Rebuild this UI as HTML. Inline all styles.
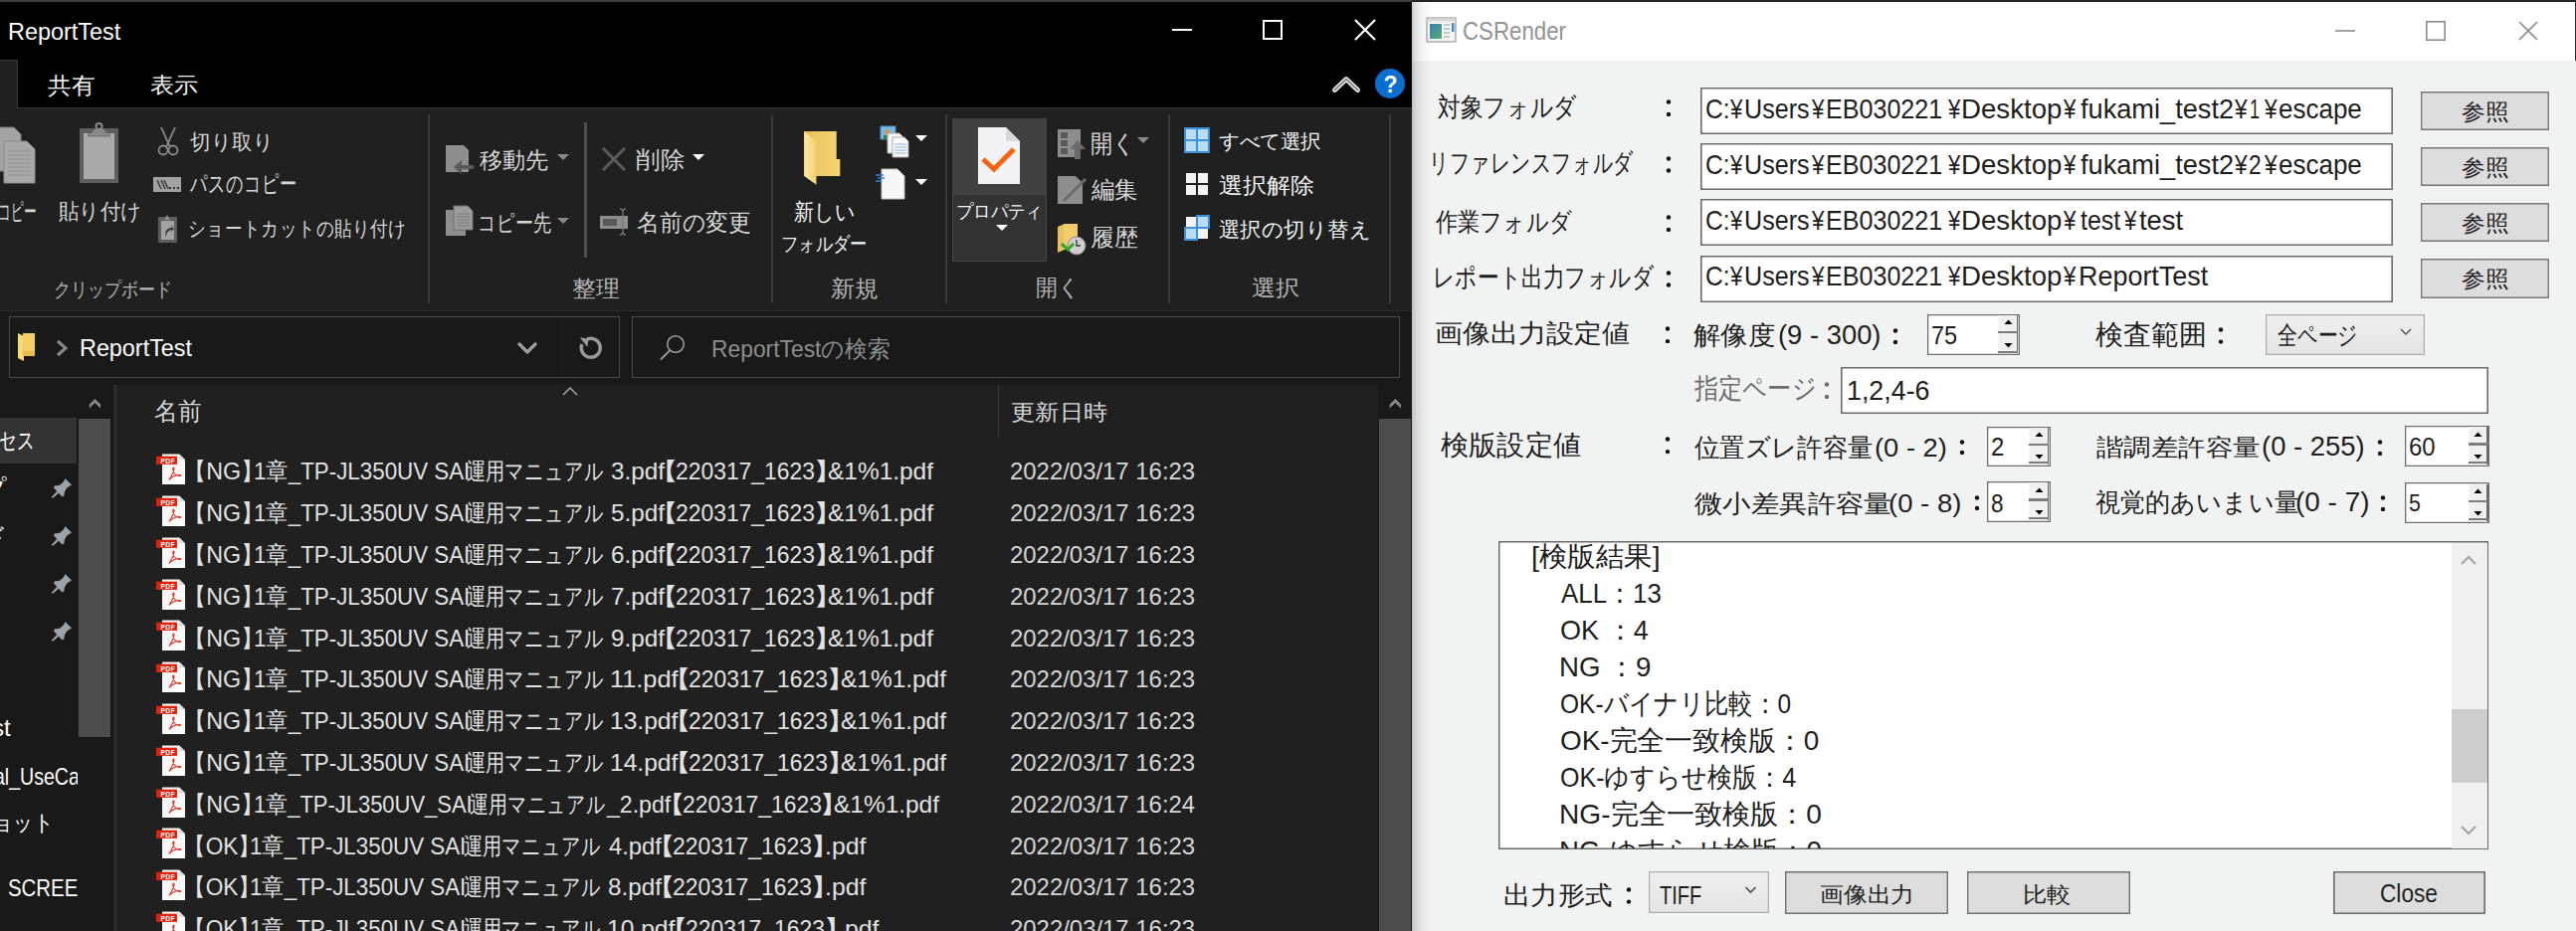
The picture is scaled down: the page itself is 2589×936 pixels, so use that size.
<!DOCTYPE html>
<html lang="ja"><head><meta charset="utf-8"><title>CSRender</title><style>
html,body{margin:0;padding:0;}
body{width:2589px;height:936px;overflow:hidden;position:relative;background:#000;
 font-family:"Liberation Sans",sans-serif;}
.a{position:absolute;}
.t{position:absolute;white-space:nowrap;transform-origin:0 0;}
</style></head><body>
<div class="a" style="left:0px;top:0px;width:1419px;height:2px;background:#3c3c3c;"></div>
<div class="a" style="left:0px;top:2px;width:1419px;height:107px;background:#000;"></div>
<div class="a" style="left:0px;top:60px;width:18px;height:49px;background:#212121;"></div>
<div class="a" style="left:0px;top:60px;width:18px;height:1px;background:#363636;"></div>
<div class="a" style="left:17px;top:60px;width:1px;height:49px;background:#363636;"></div>
<div class="t" style="left:8.0px;top:20.5px;font-size:23px;line-height:23px;color:#ffffff;transform:scaleX(1.0183);">ReportTest</div>
<div class="t" style="left:48.0px;top:74.5px;font-size:22.94px;line-height:22.94px;color:#f2f2f2;transform:scaleX(1.0258);">共有</div>
<div class="t" style="left:150.9px;top:75.4px;font-size:22.0px;line-height:22.0px;color:#f2f2f2;transform:scaleX(1.0952);">表示</div>
<div class="a" style="left:1178px;top:29px;width:20px;height:2px;background:#fff;"></div>
<div class="a" style="left:1269px;top:20px;width:20px;height:20px;box-shadow:inset 0 0 0 2px #fff;"></div>
<svg class="a" style="left:1360px;top:18px;" width="24" height="24" viewBox="0 0 24 24"><path d="M2 2L22 22M22 2L2 22" stroke="#fff" stroke-width="2.2"/></svg>
<svg class="a" style="left:1334px;top:72px;" width="38" height="26" viewBox="1334 72 38 26"><path d="M1341.5 90.5L1353 79.5L1364.5 90.5" fill="none" stroke="#f4f4f4" stroke-width="4.8" stroke-linecap="round" stroke-linejoin="round"/><path d="M1341.5 90.5L1353 79.5L1364.5 90.5" fill="none" stroke="#8c8c8c" stroke-width="2.2" stroke-linecap="round" stroke-linejoin="round"/></svg>
<svg class="a" style="left:1381px;top:68px;" width="32" height="32" viewBox="0 0 32 32"><circle cx="16" cy="16" r="15" fill="#0a6fd1"/><text x="16.5" y="24.5" font-size="23" font-weight="bold" font-family="Liberation Sans" fill="#fff" text-anchor="middle">?</text></svg>
<div class="a" style="left:0px;top:109px;width:1419px;height:203px;background:#202020;"></div>
<div class="a" style="left:18px;top:108px;width:1401px;height:1px;background:#363636;"></div>
<div class="a" style="left:0px;top:312px;width:1419px;height:1px;background:#2c2c2c;"></div>
<div class="a" style="left:430px;top:115px;width:2px;height:190px;background:#3a3a3a;"></div>
<div class="a" style="left:775px;top:115px;width:2px;height:190px;background:#3a3a3a;"></div>
<div class="a" style="left:950px;top:115px;width:2px;height:190px;background:#3a3a3a;"></div>
<div class="a" style="left:1174px;top:115px;width:2px;height:190px;background:#3a3a3a;"></div>
<div class="a" style="left:1396px;top:115px;width:2px;height:190px;background:#3a3a3a;"></div>
<div class="a" style="left:587px;top:123px;width:3px;height:136px;background:#4e4e4e;"></div>
<svg class="a" style="left:0px;top:126px;" width="38" height="60" viewBox="0 0 38 60">
<path d="M-6 2H14L21 9V46H-6Z" fill="#a3a3a3" stroke="#7a7a7a"/>
<path d="M4 16H27L35 24V58H4Z" fill="#a8a8a8" stroke="#8a8a8a"/>
<path d="M8 26H31M8 30H31M8 34H31M8 38H31M8 42H31M8 46H31M8 50H31" stroke="#909090" stroke-width="1"/>
</svg>
<svg class="a" style="left:78px;top:120px;" width="44" height="66" viewBox="0 0 44 66">
<rect x="2" y="9" width="39" height="55" fill="#5e5e5e"/>
<rect x="6" y="14" width="31" height="46" fill="#a9a9a9"/>
<path d="M10 16H33" stroke="#777" stroke-width="3"/>
<circle cx="21.5" cy="7" r="3" fill="none" stroke="#8a8a8a" stroke-width="2"/>
<path d="M12 16L17 10H26L31 16Z" fill="#8a8a8a"/>
</svg>
<svg class="a" style="left:156px;top:126px;" width="26" height="32" viewBox="0 0 26 32">
<path d="M6 2L15 22M20 2L11 22" stroke="#8c8c8c" stroke-width="1.8"/>
<circle cx="8" cy="25" r="4.5" fill="none" stroke="#8c8c8c" stroke-width="1.8"/>
<circle cx="18" cy="25" r="4.5" fill="none" stroke="#8c8c8c" stroke-width="1.8"/>
</svg>
<svg class="a" style="left:153px;top:177px;" width="31" height="18" viewBox="0 0 31 18">
<rect x="1" y="1" width="28" height="15" fill="#a2a2a2"/>
<path d="M5 4L9 13M9 4L13 13M12 4L16 13" stroke="#333" stroke-width="1.4"/>
<rect x="17" y="11" width="2" height="2" fill="#333"/><rect x="21" y="11" width="2" height="2" fill="#333"/><rect x="25" y="11" width="2" height="2" fill="#333"/>
</svg>
<svg class="a" style="left:156px;top:213px;" width="25" height="33" viewBox="0 0 25 33">
<rect x="3" y="5" width="19" height="26" rx="1" fill="#5e5e5e"/>
<rect x="6" y="9" width="13" height="19" fill="#a3a3a3"/>
<path d="M9 8L12 3L15 8Z" fill="#8a8a8a"/>
<path d="M10 25C10 19 12 16 17 16L15 13L19 17L15 21L17 18C13 18 12 21 10 25Z" fill="#333"/>
</svg>
<div class="t" style="left:-2.1px;top:200.7px;font-size:24px;line-height:24px;color:#d6d6d6;transform:scaleX(0.5294);">コピー</div>
<div class="t" style="left:59.1px;top:202.0px;font-size:22.0px;line-height:22.0px;color:#d6d6d6;transform:scaleX(0.9293);">貼り付け</div>
<div class="t" style="left:191.0px;top:131.8px;font-size:21.0px;line-height:21.0px;color:#d6d6d6;transform:scaleX(0.9769);">切り取り</div>
<div class="t" style="left:191.0px;top:174.4px;font-size:23.69px;line-height:23.69px;color:#d6d6d6;transform:scaleX(0.7202);">パスのコピー</div>
<div class="t" style="left:188.9px;top:219.6px;font-size:21.4px;line-height:21.4px;color:#d6d6d6;transform:scaleX(0.8402);">ショートカットの貼り付け</div>
<div class="t" style="left:53.5px;top:280.9px;font-size:20.0px;line-height:20.0px;color:#b4b4b4;transform:scaleX(0.8500);">クリップボード</div>
<svg class="a" style="left:446px;top:144px;" width="32" height="34" viewBox="0 0 32 34">
<path d="M2 2H20L25 7V29H2Z" fill="#8e8e8e"/>
<path d="M30 22H18V17L10 24L18 31V26H30Z" fill="#5a5a5a"/>
</svg>
<svg class="a" style="left:446px;top:205px;" width="32" height="34" viewBox="0 0 32 34">
<path d="M2 6H18L22 10V32H2Z" fill="#8e8e8e"/>
<path d="M10 2H24L29 7V26H10Z" fill="#9c9c9c" stroke="#6e6e6e" stroke-width="1"/>
<path d="M13 10H26M13 13H26M13 16H26M13 19H26M13 22H26" stroke="#7a7a7a" stroke-width="1"/>
</svg>
<svg class="a" style="left:603px;top:146px;" width="28" height="28" viewBox="0 0 28 28"><path d="M3 3L25 25M25 3L3 25" stroke="#5c5c5c" stroke-width="3"/></svg>
<svg class="a" style="left:601px;top:208px;" width="33" height="30" viewBox="0 0 33 30">
<rect x="2" y="9" width="28" height="13" fill="#8e8e8e"/>
<rect x="5" y="12" width="14" height="7" fill="#5a5a5a"/>
<path d="M22 2C24 2 25 3 25 5V25C25 27 24 28 22 28M28 2C26 2 25 3 25 5M28 28C26 28 25 27 25 25" stroke="#777" stroke-width="1.3" fill="none"/>
</svg>
<div class="t" style="left:481.5px;top:149.6px;font-size:23.42px;line-height:23.42px;color:#d6d6d6;transform:scaleX(1.0038);">移動先</div>
<div class="t" style="left:479.6px;top:213.0px;font-size:23.0px;line-height:23.0px;color:#d6d6d6;transform:scaleX(0.7889);">コピー先</div>
<div class="t" style="left:638.9px;top:149.0px;font-size:24.05px;line-height:24.05px;color:#d6d6d6;transform:scaleX(1.0217);">削除</div>
<div class="t" style="left:640.0px;top:212.0px;font-size:24.05px;line-height:24.05px;color:#d6d6d6;transform:scaleX(0.9481);">名前の変更</div>
<svg class="a" style="left:559px;top:154px;" width="14" height="9" viewBox="0 0 14 9"><path d="M1 1H13L7 7Z" fill="#8a8a8a"/></svg>
<svg class="a" style="left:559px;top:218px;" width="14" height="9" viewBox="0 0 14 9"><path d="M1 1H13L7 7Z" fill="#8a8a8a"/></svg>
<svg class="a" style="left:695px;top:154px;" width="14" height="9" viewBox="0 0 14 9"><path d="M1 1H13L7 7Z" fill="#ffffff"/></svg>
<div class="t" style="left:574.9px;top:279.0px;font-size:23.1px;line-height:23.1px;color:#b4b4b4;transform:scaleX(1.0431);">整理</div>
<svg class="a" style="left:804px;top:128px;" width="44" height="62" viewBox="804 128 44 62">
<defs><linearGradient id="fb" x1="0" y1="0" x2="1" y2="0"><stop offset="0" stop-color="#e9bf55"/><stop offset="1" stop-color="#f6d577"/></linearGradient>
<linearGradient id="ff" x1="0" y1="0" x2="1" y2="0"><stop offset="0" stop-color="#fde7a6"/><stop offset="1" stop-color="#f2cf70"/></linearGradient></defs>
<path d="M808.2 131.9H840.7V160H844.3V177H808.2Z" fill="url(#fb)"/>
<path d="M808.2 131.9L820.5 142V185.8L808.2 177Z" fill="url(#ff)"/>
</svg>
<svg class="a" style="left:883px;top:125px;" width="32" height="34" viewBox="0 0 32 34">
<rect x="2" y="2" width="15" height="13" fill="#7ab8e8" stroke="#4d8fc4"/>
<circle cx="9" cy="8" r="3" fill="#c79a6a"/><rect x="5" y="11" width="8" height="4" fill="#3f7d4a"/>
<path d="M9 9H21L25 13V29H9Z" fill="#f4f4f4" stroke="#aaa"/>
<path d="M14 13H26L30 17V33H14Z" fill="#fafafa" stroke="#aaa"/>
<path d="M16 20H28M16 23H28M16 26H28M16 29H28" stroke="#8fb0dd" stroke-width="1"/>
</svg>
<svg class="a" style="left:880px;top:168px;" width="32" height="34" viewBox="0 0 32 34">
<path d="M6 2H22L29 9V32H6Z" fill="#f7f7f7" stroke="#bdbdbd"/>
<path d="M0 8H8M2 11H9M0 14H6" stroke="#2f7fd8" stroke-width="1.3"/>
</svg>
<svg class="a" style="left:919px;top:134px;" width="14" height="10" viewBox="0 0 14 10"><path d="M1 2H13L7 8Z" fill="#ffffff"/></svg>
<svg class="a" style="left:919px;top:178px;" width="14" height="10" viewBox="0 0 14 10"><path d="M1 2H13L7 8Z" fill="#ffffff"/></svg>
<div class="t" style="left:798.1px;top:202.0px;font-size:23.0px;line-height:23.0px;color:#f2f2f2;transform:scaleX(0.8676);">新しい</div>
<div class="t" style="left:784.5px;top:236.0px;font-size:19.86px;line-height:19.86px;color:#f2f2f2;transform:scaleX(0.8659);">フォルダー</div>
<div class="t" style="left:834.9px;top:279.0px;font-size:23.05px;line-height:23.05px;color:#b4b4b4;transform:scaleX(1.0455);">新規</div>
<div class="a" style="left:957px;top:119px;width:95px;height:76px;background:#414141;"></div>
<div class="a" style="left:957px;top:195px;width:95px;height:68px;background:#333333;box-shadow:inset 0 0 0 1px #474747;"></div>
<svg class="a" style="left:981px;top:127px;" width="46" height="60" viewBox="0 0 46 60">
<path d="M2 1H30L44 15V58H2Z" fill="#f3f3f5"/>
<path d="M30 1V15H44Z" fill="#d8d8dc"/>
<path d="M7 33L18 43L38 23" fill="none" stroke="#f8650e" stroke-width="5"/>
</svg>
<div class="t" style="left:960.9px;top:203.7px;font-size:18.92px;line-height:18.92px;color:#f2f2f2;transform:scaleX(0.9138);">プロパティ</div>
<svg class="a" style="left:1000px;top:225px;" width="14" height="9" viewBox="0 0 14 9"><path d="M1 1H13L7 7Z" fill="#ffffff"/></svg>
<svg class="a" style="left:1061px;top:128px;" width="30" height="34" viewBox="0 0 30 34">
<rect x="2" y="2" width="23" height="28" fill="#8e8e8e"/>
<rect x="5" y="5" width="7" height="6" fill="#5a5a5a"/><rect x="5" y="13" width="7" height="6" fill="#5a5a5a"/><rect x="5" y="21" width="7" height="6" fill="#5a5a5a"/>
<path d="M19 32V22H14L22 13L30 22H25V32Z" fill="#6a6a6a"/>
</svg>
<svg class="a" style="left:1061px;top:175px;" width="32" height="32" viewBox="0 0 32 32">
<path d="M2 2H20L27 9V30H2Z" fill="#8e8e8e"/>
<path d="M8 27L30 5" stroke="#6a6a6a" stroke-width="3"/>
</svg>
<svg class="a" style="left:1061px;top:223px;" width="32" height="34" viewBox="0 0 32 34">
<path d="M2 5L9 2V28L2 31Z" fill="#e7c15c"/>
<rect x="8" y="2" width="14" height="26" fill="#f0cd6a"/>
<circle cx="21" cy="24" r="9" fill="#cfcfcf" stroke="#888"/>
<path d="M21 18V24H25" stroke="#333" stroke-width="1.3" fill="none"/>
<path d="M6 22L12 28L18 22" fill="none" stroke="#2aa52a" stroke-width="3"/>
</svg>
<div class="t" style="left:1096.0px;top:131.9px;font-size:25.19px;line-height:25.19px;color:#d6d6d6;transform:scaleX(0.8884);">開く</div>
<svg class="a" style="left:1142px;top:137px;" width="14" height="9" viewBox="0 0 14 9"><path d="M1 1H13L7 7Z" fill="#8a8a8a"/></svg>
<div class="t" style="left:1097.0px;top:179.0px;font-size:24.1px;line-height:24.1px;color:#d6d6d6;transform:scaleX(0.9758);">編集</div>
<div class="t" style="left:1096.0px;top:227.0px;font-size:24.1px;line-height:24.1px;color:#d6d6d6;transform:scaleX(0.9979);">履歴</div>
<div class="t" style="left:1041.0px;top:277.9px;font-size:23.1px;line-height:23.1px;color:#b4b4b4;transform:scaleX(0.9524);">開く</div>
<svg class="a" style="left:1188px;top:126px;" width="30" height="30" viewBox="0 0 30 30">
<rect x="2" y="2" width="26" height="26" fill="#3d8fd8"/>
<rect x="4" y="4" width="10" height="10" fill="#b9dcf7"/><rect x="16" y="4" width="10" height="10" fill="#b9dcf7"/>
<rect x="4" y="16" width="10" height="10" fill="#b9dcf7"/><rect x="16" y="16" width="10" height="10" fill="#b9dcf7"/>
</svg>
<svg class="a" style="left:1188px;top:172px;" width="30" height="28" viewBox="0 0 30 28">
<rect x="4" y="2" width="10" height="10" fill="#f2f2f2"/><rect x="16" y="2" width="10" height="10" fill="#f2f2f2"/>
<rect x="4" y="14" width="10" height="10" fill="#f2f2f2"/><rect x="16" y="14" width="10" height="10" fill="#f2f2f2"/>
</svg>
<svg class="a" style="left:1188px;top:214px;" width="30" height="30" viewBox="0 0 30 30">
<rect x="4" y="4" width="10" height="10" fill="#f2f2f2"/>
<rect x="14" y="2" width="14" height="14" fill="#3d8fd8"/><rect x="16" y="4" width="10" height="10" fill="#b9dcf7"/>
<rect x="2" y="14" width="14" height="14" fill="#3d8fd8"/><rect x="4" y="16" width="10" height="10" fill="#b9dcf7"/>
<rect x="16" y="16" width="10" height="10" fill="#f2f2f2"/>
</svg>
<div class="t" style="left:1225.1px;top:132.0px;font-size:20.0px;line-height:20.0px;color:#f2f2f2;transform:scaleX(1.0310);">すべて選択</div>
<div class="t" style="left:1225.0px;top:176.0px;font-size:21.95px;line-height:21.95px;color:#f2f2f2;transform:scaleX(1.0942);">選択解除</div>
<div class="t" style="left:1225.1px;top:220.0px;font-size:21.0px;line-height:21.0px;color:#f2f2f2;transform:scaleX(1.0199);">選択の切り替え</div>
<div class="t" style="left:1257.9px;top:279.0px;font-size:22.0px;line-height:22.0px;color:#b4b4b4;transform:scaleX(1.0952);">選択</div>
<div class="a" style="left:0px;top:313px;width:1419px;height:74px;background:#191919;"></div>
<div class="a" style="left:9px;top:318px;width:614px;height:62px;background:#191919;box-shadow:inset 0 0 0 1px #4b4b4b;"></div>
<div class="a" style="left:560px;top:319px;width:1px;height:60px;background:#151515;"></div>
<svg class="a" style="left:15px;top:333px;" width="24" height="32" viewBox="0 0 24 32">
<path d="M3 2L9 5V30L3 27Z" fill="#f7d978"/>
<rect x="8" y="2" width="12" height="22" fill="#f2cd62"/>
<rect x="8" y="20" width="12" height="5" fill="#e8bc4a"/>
</svg>
<svg class="a" style="left:54px;top:341px;" width="16" height="18" viewBox="0 0 16 18"><path d="M4 2L12 9L4 16" fill="none" stroke="#8a8a8a" stroke-width="3"/></svg>
<div class="t" style="left:80.1px;top:337.7px;font-size:24px;line-height:24px;color:#ffffff;transform:scaleX(0.9737);">ReportTest</div>
<svg class="a" style="left:518px;top:342px;" width="24" height="16" viewBox="0 0 24 16"><path d="M3 3L12 12L21 3" fill="none" stroke="#a0a0a0" stroke-width="3.2"/></svg>
<svg class="a" style="left:578px;top:336px;" width="28" height="28" viewBox="0 0 28 28"><path d="M7 10A9.5 9.5 0 1 0 12 5" fill="none" stroke="#9a9a9a" stroke-width="3.4"/><path d="M4 4H13V12Z" fill="#9a9a9a" transform="rotate(10 9 8)"/></svg>
<div class="a" style="left:635px;top:318px;width:772px;height:62px;background:#191919;box-shadow:inset 0 0 0 1px #4b4b4b;"></div>
<svg class="a" style="left:661px;top:334px;" width="30" height="30" viewBox="0 0 30 30"><circle cx="18" cy="12" r="8.3" fill="none" stroke="#9c9c9c" stroke-width="1.6"/><path d="M12.5 18L3 27.5" stroke="#9c9c9c" stroke-width="1.8"/></svg>
<div class="t" style="left:715.1px;top:338.7px;font-size:24px;line-height:24px;color:#8e8e8e;transform:scaleX(0.9516);">ReportTestの検索</div>
<div class="a" style="left:0px;top:387px;width:78px;height:549px;background:#191919;"></div>
<div class="a" style="left:0px;top:420px;width:77px;height:46px;background:#333333;"></div>
<div class="a" style="left:77px;top:387px;width:36px;height:549px;background:#191919;"></div>
<div class="a" style="left:79px;top:421px;width:32px;height:320px;background:#4d4d4d;"></div>
<svg class="a" style="left:86px;top:396px;" width="20" height="18" viewBox="86 396 20 18"><path d="M89.8 410.5V406.6L95.4 401L101 406.6V410.5L95.4 405Z" fill="#8a8a8a"/></svg>
<div class="a" style="left:112.8px;top:387px;width:1.5px;height:549px;background:#151515;"></div>
<div class="a" style="left:114.3px;top:387px;width:2.799999999999997px;height:549px;background:#2c2c2c;"></div>
<div class="a" style="left:0px;top:387px;width:77px;height:549px;overflow:hidden"><div style="position:absolute;left:0px;top:-387px;width:2589px;height:936px"><div class="t" style="left:-1.2px;top:430.7px;font-size:24.38px;line-height:24.38px;color:#ffffff;transform:scaleX(0.7329);">セス</div></div></div>
<div class="a" style="left:0px;top:387px;width:77px;height:549px;overflow:hidden"><div style="position:absolute;left:0px;top:-387px;width:2589px;height:936px"><div class="t" style="left:-143.0px;top:478.7px;font-size:24px;line-height:24px;color:#ffffff;">デスクトップ</div></div></div>
<div class="a" style="left:0px;top:387px;width:77px;height:549px;overflow:hidden"><div style="position:absolute;left:0px;top:-387px;width:2589px;height:936px"><div class="t" style="left:-141.0px;top:526.7px;font-size:24px;line-height:24px;color:#ffffff;">ダウンロード</div></div></div>
<div class="a" style="left:0px;top:387px;width:78px;height:549px;overflow:hidden"><div style="position:absolute;left:0px;top:-387px;width:2589px;height:936px"><div class="t" style="left:-8.0px;top:719.7px;font-size:24px;line-height:24px;color:#ffffff;">st</div></div></div>
<div class="a" style="left:0px;top:387px;width:78px;height:549px;overflow:hidden"><div style="position:absolute;left:0px;top:-387px;width:2589px;height:936px"><div class="t" style="left:-5.8px;top:768.7px;font-size:24px;line-height:24px;color:#ffffff;transform:scaleX(0.8140);">al_UseCase</div></div></div>
<div class="a" style="left:0px;top:387px;width:78px;height:549px;overflow:hidden"><div style="position:absolute;left:0px;top:-387px;width:2589px;height:936px"><div class="t" style="left:-7.0px;top:815.6px;font-size:23.4px;line-height:23.4px;color:#ffffff;transform:scaleX(0.8519);">ョット</div></div></div>
<div class="a" style="left:0px;top:387px;width:78px;height:549px;overflow:hidden"><div style="position:absolute;left:0px;top:-387px;width:2589px;height:936px"><div class="t" style="left:8.1px;top:881.2px;font-size:24px;line-height:24px;color:#ffffff;transform:scaleX(0.8505);">SCREEN</div></div></div>
<svg class="a" style="left:48px;top:477px;" width="28" height="28" viewBox="48 477 28 28"><path d="M65.5 480.9 L72.0 487.4 L67.5 490.2 L65.1 494.0 L64.2 498.8 L62.3 499.2 L58.9 495.8 L52.9 500.9 L52.0 499.6 L57.2 494.0 L54.0 490.2 L54.6 488.5 L60.0 487.8 L64.0 484.2Z" fill="#9aa2a8"/></svg>
<svg class="a" style="left:48px;top:525px;" width="28" height="28" viewBox="48 525 28 28"><path d="M65.5 528.9 L72.0 535.4 L67.5 538.2 L65.1 542.0 L64.2 546.8 L62.3 547.2 L58.9 543.8 L52.9 548.9 L52.0 547.6 L57.2 542.0 L54.0 538.2 L54.6 536.5 L60.0 535.8 L64.0 532.2Z" fill="#9aa2a8"/></svg>
<svg class="a" style="left:48px;top:573px;" width="28" height="28" viewBox="48 573 28 28"><path d="M65.5 576.9 L72.0 583.4 L67.5 586.2 L65.1 590.0 L64.2 594.8 L62.3 595.2 L58.9 591.8 L52.9 596.9 L52.0 595.6 L57.2 590.0 L54.0 586.2 L54.6 584.5 L60.0 583.8 L64.0 580.2Z" fill="#9aa2a8"/></svg>
<svg class="a" style="left:48px;top:621px;" width="28" height="28" viewBox="48 621 28 28"><path d="M65.5 624.9 L72.0 631.4 L67.5 634.2 L65.1 638.0 L64.2 642.8 L62.3 643.2 L58.9 639.8 L52.9 644.9 L52.0 643.6 L57.2 638.0 L54.0 634.2 L54.6 632.5 L60.0 631.8 L64.0 628.2Z" fill="#9aa2a8"/></svg>
<div class="a" style="left:117px;top:387px;width:1268px;height:549px;background:#202020;"></div>
<div class="a" style="left:1385px;top:387px;width:34px;height:549px;background:#191919;"></div>
<div class="a" style="left:1386px;top:421px;width:32px;height:515px;background:#4d4d4d;"></div>
<svg class="a" style="left:1390px;top:396px;" width="24" height="18" viewBox="1390 396 24 18"><path d="M1396.7 410.5V406.6L1402.3 401L1407.9 406.6V410.5L1402.3 405Z" fill="#8a8a8a"/></svg>
<svg class="a" style="left:563px;top:386px;" width="20" height="14" viewBox="0 0 20 14"><path d="M3 11L10 4L17 11" fill="none" stroke="#b0b0b0" stroke-width="1.3"/></svg>
<div class="a" style="left:1003px;top:387px;width:1px;height:52px;background:#3c3c3c;"></div>
<div class="t" style="left:155.0px;top:401.9px;font-size:24.64px;line-height:24.64px;color:#d6d6d6;transform:scaleX(0.9439);">名前</div>
<div class="t" style="left:1015.6px;top:404.0px;font-size:21.95px;line-height:21.95px;color:#d6d6d6;transform:scaleX(1.1035);">更新日時</div>
<svg class="a" style="left:156px;top:455.1px;" width="32" height="34" viewBox="0 0 32 34">
<defs><linearGradient id="pg" x1="0" y1="0" x2="1" y2="1"><stop offset="0" stop-color="#f2f2f2"/><stop offset="1" stop-color="#ffffff"/></linearGradient></defs>
<path d="M7 1.5H24.2L30 7.3V32H7Z" fill="url(#pg)"/>
<path d="M24.2 1.5V7.3H30Z" fill="#dcdcdc"/>
<rect x="1" y="3.7" width="21" height="8.2" fill="#e0220c"/>
<text x="5.6" y="10.6" font-size="6.8" font-weight="bold" font-family="Liberation Sans" fill="#fff" letter-spacing="0.2">PDF</text>
<path d="M14 27.5C16 24 18.5 20 19 16.5C19.3 14.5 17.8 14.5 17.8 16.5C17.8 20 20.5 23 24.5 23.5C26 23.7 26 22.5 24.5 22.5C20 22.5 16 25 14 27.5Z" fill="none" stroke="#e02a1a" stroke-width="1.1"/>
</svg>
<div class="a" style="left:117px;top:387px;width:1268px;height:549px;overflow:hidden"><div style="position:absolute;left:-117px;top:-387px;width:2589px;height:936px"><div class="t" style="left:184.4px;top:462.3px;font-size:24px;line-height:24px;color:#e2e2e2;transform:scaleX(0.9704);">【NG】</div></div></div>
<div class="a" style="left:117px;top:387px;width:1268px;height:549px;overflow:hidden"><div style="position:absolute;left:-117px;top:-387px;width:2589px;height:936px"><div class="t" style="left:254.5px;top:462.3px;font-size:24px;line-height:24px;color:#e2e2e2;transform:scaleX(0.9310);">1章_TP-JL350UV SAI</div></div></div>
<div class="a" style="left:117px;top:387px;width:1268px;height:549px;overflow:hidden"><div style="position:absolute;left:-117px;top:-387px;width:2589px;height:936px"><div class="t" style="left:469.3px;top:462.3px;font-size:24px;line-height:24px;color:#e2e2e2;transform:scaleX(0.7965);">運用マニュアル</div></div></div>
<div class="a" style="left:117px;top:387px;width:1268px;height:549px;overflow:hidden"><div style="position:absolute;left:-117px;top:-387px;width:2589px;height:936px"><div class="t" style="left:613.8px;top:462.3px;font-size:24px;line-height:24px;color:#e2e2e2;transform:scaleX(1.0094);">3.pdf</div></div></div>
<div class="a" style="left:117px;top:387px;width:1268px;height:549px;overflow:hidden"><div style="position:absolute;left:-117px;top:-387px;width:2589px;height:936px"><div class="t" style="left:651.3px;top:462.3px;font-size:24px;line-height:24px;color:#e2e2e2;transform:scaleX(1.3000);">【</div></div></div>
<div class="a" style="left:117px;top:387px;width:1268px;height:549px;overflow:hidden"><div style="position:absolute;left:-117px;top:-387px;width:2589px;height:936px"><div class="t" style="left:679.4px;top:462.3px;font-size:24px;line-height:24px;color:#e2e2e2;transform:scaleX(0.9531);">220317_1623</div></div></div>
<div class="a" style="left:117px;top:387px;width:1268px;height:549px;overflow:hidden"><div style="position:absolute;left:-117px;top:-387px;width:2589px;height:936px"><div class="t" style="left:817.0px;top:462.3px;font-size:24px;line-height:24px;color:#e2e2e2;transform:scaleX(1.3000);">】</div></div></div>
<div class="a" style="left:117px;top:387px;width:1268px;height:549px;overflow:hidden"><div style="position:absolute;left:-117px;top:-387px;width:2589px;height:936px"><div class="t" style="left:831.6px;top:462.3px;font-size:24px;line-height:24px;color:#e2e2e2;transform:scaleX(1.0184);">&amp;1%1.pdf</div></div></div>
<div class="a" style="left:117px;top:387px;width:1268px;height:549px;overflow:hidden"><div style="position:absolute;left:-117px;top:-387px;width:2589px;height:936px"><div class="t" style="left:1015.4px;top:462.3px;font-size:24px;line-height:24px;color:#d6d6d6;transform:scaleX(0.9962);">2022/03/17 16:23</div></div></div>
<svg class="a" style="left:156px;top:496.9px;" width="32" height="34" viewBox="0 0 32 34">
<defs><linearGradient id="pg" x1="0" y1="0" x2="1" y2="1"><stop offset="0" stop-color="#f2f2f2"/><stop offset="1" stop-color="#ffffff"/></linearGradient></defs>
<path d="M7 1.5H24.2L30 7.3V32H7Z" fill="url(#pg)"/>
<path d="M24.2 1.5V7.3H30Z" fill="#dcdcdc"/>
<rect x="1" y="3.7" width="21" height="8.2" fill="#e0220c"/>
<text x="5.6" y="10.6" font-size="6.8" font-weight="bold" font-family="Liberation Sans" fill="#fff" letter-spacing="0.2">PDF</text>
<path d="M14 27.5C16 24 18.5 20 19 16.5C19.3 14.5 17.8 14.5 17.8 16.5C17.8 20 20.5 23 24.5 23.5C26 23.7 26 22.5 24.5 22.5C20 22.5 16 25 14 27.5Z" fill="none" stroke="#e02a1a" stroke-width="1.1"/>
</svg>
<div class="a" style="left:117px;top:387px;width:1268px;height:549px;overflow:hidden"><div style="position:absolute;left:-117px;top:-387px;width:2589px;height:936px"><div class="t" style="left:184.4px;top:504.1px;font-size:24px;line-height:24px;color:#e2e2e2;transform:scaleX(0.9704);">【NG】</div></div></div>
<div class="a" style="left:117px;top:387px;width:1268px;height:549px;overflow:hidden"><div style="position:absolute;left:-117px;top:-387px;width:2589px;height:936px"><div class="t" style="left:254.5px;top:504.1px;font-size:24px;line-height:24px;color:#e2e2e2;transform:scaleX(0.9310);">1章_TP-JL350UV SAI</div></div></div>
<div class="a" style="left:117px;top:387px;width:1268px;height:549px;overflow:hidden"><div style="position:absolute;left:-117px;top:-387px;width:2589px;height:936px"><div class="t" style="left:469.3px;top:504.1px;font-size:24px;line-height:24px;color:#e2e2e2;transform:scaleX(0.7965);">運用マニュアル</div></div></div>
<div class="a" style="left:117px;top:387px;width:1268px;height:549px;overflow:hidden"><div style="position:absolute;left:-117px;top:-387px;width:2589px;height:936px"><div class="t" style="left:613.8px;top:504.1px;font-size:24px;line-height:24px;color:#e2e2e2;transform:scaleX(1.0094);">5.pdf</div></div></div>
<div class="a" style="left:117px;top:387px;width:1268px;height:549px;overflow:hidden"><div style="position:absolute;left:-117px;top:-387px;width:2589px;height:936px"><div class="t" style="left:651.3px;top:504.1px;font-size:24px;line-height:24px;color:#e2e2e2;transform:scaleX(1.3000);">【</div></div></div>
<div class="a" style="left:117px;top:387px;width:1268px;height:549px;overflow:hidden"><div style="position:absolute;left:-117px;top:-387px;width:2589px;height:936px"><div class="t" style="left:679.4px;top:504.1px;font-size:24px;line-height:24px;color:#e2e2e2;transform:scaleX(0.9531);">220317_1623</div></div></div>
<div class="a" style="left:117px;top:387px;width:1268px;height:549px;overflow:hidden"><div style="position:absolute;left:-117px;top:-387px;width:2589px;height:936px"><div class="t" style="left:817.0px;top:504.1px;font-size:24px;line-height:24px;color:#e2e2e2;transform:scaleX(1.3000);">】</div></div></div>
<div class="a" style="left:117px;top:387px;width:1268px;height:549px;overflow:hidden"><div style="position:absolute;left:-117px;top:-387px;width:2589px;height:936px"><div class="t" style="left:831.6px;top:504.1px;font-size:24px;line-height:24px;color:#e2e2e2;transform:scaleX(1.0184);">&amp;1%1.pdf</div></div></div>
<div class="a" style="left:117px;top:387px;width:1268px;height:549px;overflow:hidden"><div style="position:absolute;left:-117px;top:-387px;width:2589px;height:936px"><div class="t" style="left:1015.4px;top:504.1px;font-size:24px;line-height:24px;color:#d6d6d6;transform:scaleX(0.9962);">2022/03/17 16:23</div></div></div>
<svg class="a" style="left:156px;top:538.7px;" width="32" height="34" viewBox="0 0 32 34">
<defs><linearGradient id="pg" x1="0" y1="0" x2="1" y2="1"><stop offset="0" stop-color="#f2f2f2"/><stop offset="1" stop-color="#ffffff"/></linearGradient></defs>
<path d="M7 1.5H24.2L30 7.3V32H7Z" fill="url(#pg)"/>
<path d="M24.2 1.5V7.3H30Z" fill="#dcdcdc"/>
<rect x="1" y="3.7" width="21" height="8.2" fill="#e0220c"/>
<text x="5.6" y="10.6" font-size="6.8" font-weight="bold" font-family="Liberation Sans" fill="#fff" letter-spacing="0.2">PDF</text>
<path d="M14 27.5C16 24 18.5 20 19 16.5C19.3 14.5 17.8 14.5 17.8 16.5C17.8 20 20.5 23 24.5 23.5C26 23.7 26 22.5 24.5 22.5C20 22.5 16 25 14 27.5Z" fill="none" stroke="#e02a1a" stroke-width="1.1"/>
</svg>
<div class="a" style="left:117px;top:387px;width:1268px;height:549px;overflow:hidden"><div style="position:absolute;left:-117px;top:-387px;width:2589px;height:936px"><div class="t" style="left:184.4px;top:545.9px;font-size:24px;line-height:24px;color:#e2e2e2;transform:scaleX(0.9704);">【NG】</div></div></div>
<div class="a" style="left:117px;top:387px;width:1268px;height:549px;overflow:hidden"><div style="position:absolute;left:-117px;top:-387px;width:2589px;height:936px"><div class="t" style="left:254.5px;top:545.9px;font-size:24px;line-height:24px;color:#e2e2e2;transform:scaleX(0.9310);">1章_TP-JL350UV SAI</div></div></div>
<div class="a" style="left:117px;top:387px;width:1268px;height:549px;overflow:hidden"><div style="position:absolute;left:-117px;top:-387px;width:2589px;height:936px"><div class="t" style="left:469.3px;top:545.9px;font-size:24px;line-height:24px;color:#e2e2e2;transform:scaleX(0.7965);">運用マニュアル</div></div></div>
<div class="a" style="left:117px;top:387px;width:1268px;height:549px;overflow:hidden"><div style="position:absolute;left:-117px;top:-387px;width:2589px;height:936px"><div class="t" style="left:613.8px;top:545.9px;font-size:24px;line-height:24px;color:#e2e2e2;transform:scaleX(1.0094);">6.pdf</div></div></div>
<div class="a" style="left:117px;top:387px;width:1268px;height:549px;overflow:hidden"><div style="position:absolute;left:-117px;top:-387px;width:2589px;height:936px"><div class="t" style="left:651.3px;top:545.9px;font-size:24px;line-height:24px;color:#e2e2e2;transform:scaleX(1.3000);">【</div></div></div>
<div class="a" style="left:117px;top:387px;width:1268px;height:549px;overflow:hidden"><div style="position:absolute;left:-117px;top:-387px;width:2589px;height:936px"><div class="t" style="left:679.4px;top:545.9px;font-size:24px;line-height:24px;color:#e2e2e2;transform:scaleX(0.9531);">220317_1623</div></div></div>
<div class="a" style="left:117px;top:387px;width:1268px;height:549px;overflow:hidden"><div style="position:absolute;left:-117px;top:-387px;width:2589px;height:936px"><div class="t" style="left:817.0px;top:545.9px;font-size:24px;line-height:24px;color:#e2e2e2;transform:scaleX(1.3000);">】</div></div></div>
<div class="a" style="left:117px;top:387px;width:1268px;height:549px;overflow:hidden"><div style="position:absolute;left:-117px;top:-387px;width:2589px;height:936px"><div class="t" style="left:831.6px;top:545.9px;font-size:24px;line-height:24px;color:#e2e2e2;transform:scaleX(1.0184);">&amp;1%1.pdf</div></div></div>
<div class="a" style="left:117px;top:387px;width:1268px;height:549px;overflow:hidden"><div style="position:absolute;left:-117px;top:-387px;width:2589px;height:936px"><div class="t" style="left:1015.4px;top:545.9px;font-size:24px;line-height:24px;color:#d6d6d6;transform:scaleX(0.9962);">2022/03/17 16:23</div></div></div>
<svg class="a" style="left:156px;top:580.5px;" width="32" height="34" viewBox="0 0 32 34">
<defs><linearGradient id="pg" x1="0" y1="0" x2="1" y2="1"><stop offset="0" stop-color="#f2f2f2"/><stop offset="1" stop-color="#ffffff"/></linearGradient></defs>
<path d="M7 1.5H24.2L30 7.3V32H7Z" fill="url(#pg)"/>
<path d="M24.2 1.5V7.3H30Z" fill="#dcdcdc"/>
<rect x="1" y="3.7" width="21" height="8.2" fill="#e0220c"/>
<text x="5.6" y="10.6" font-size="6.8" font-weight="bold" font-family="Liberation Sans" fill="#fff" letter-spacing="0.2">PDF</text>
<path d="M14 27.5C16 24 18.5 20 19 16.5C19.3 14.5 17.8 14.5 17.8 16.5C17.8 20 20.5 23 24.5 23.5C26 23.7 26 22.5 24.5 22.5C20 22.5 16 25 14 27.5Z" fill="none" stroke="#e02a1a" stroke-width="1.1"/>
</svg>
<div class="a" style="left:117px;top:387px;width:1268px;height:549px;overflow:hidden"><div style="position:absolute;left:-117px;top:-387px;width:2589px;height:936px"><div class="t" style="left:184.4px;top:587.7px;font-size:24px;line-height:24px;color:#e2e2e2;transform:scaleX(0.9704);">【NG】</div></div></div>
<div class="a" style="left:117px;top:387px;width:1268px;height:549px;overflow:hidden"><div style="position:absolute;left:-117px;top:-387px;width:2589px;height:936px"><div class="t" style="left:254.5px;top:587.7px;font-size:24px;line-height:24px;color:#e2e2e2;transform:scaleX(0.9310);">1章_TP-JL350UV SAI</div></div></div>
<div class="a" style="left:117px;top:387px;width:1268px;height:549px;overflow:hidden"><div style="position:absolute;left:-117px;top:-387px;width:2589px;height:936px"><div class="t" style="left:469.3px;top:587.7px;font-size:24px;line-height:24px;color:#e2e2e2;transform:scaleX(0.7965);">運用マニュアル</div></div></div>
<div class="a" style="left:117px;top:387px;width:1268px;height:549px;overflow:hidden"><div style="position:absolute;left:-117px;top:-387px;width:2589px;height:936px"><div class="t" style="left:613.8px;top:587.7px;font-size:24px;line-height:24px;color:#e2e2e2;transform:scaleX(1.0094);">7.pdf</div></div></div>
<div class="a" style="left:117px;top:387px;width:1268px;height:549px;overflow:hidden"><div style="position:absolute;left:-117px;top:-387px;width:2589px;height:936px"><div class="t" style="left:651.3px;top:587.7px;font-size:24px;line-height:24px;color:#e2e2e2;transform:scaleX(1.3000);">【</div></div></div>
<div class="a" style="left:117px;top:387px;width:1268px;height:549px;overflow:hidden"><div style="position:absolute;left:-117px;top:-387px;width:2589px;height:936px"><div class="t" style="left:679.4px;top:587.7px;font-size:24px;line-height:24px;color:#e2e2e2;transform:scaleX(0.9531);">220317_1623</div></div></div>
<div class="a" style="left:117px;top:387px;width:1268px;height:549px;overflow:hidden"><div style="position:absolute;left:-117px;top:-387px;width:2589px;height:936px"><div class="t" style="left:817.0px;top:587.7px;font-size:24px;line-height:24px;color:#e2e2e2;transform:scaleX(1.3000);">】</div></div></div>
<div class="a" style="left:117px;top:387px;width:1268px;height:549px;overflow:hidden"><div style="position:absolute;left:-117px;top:-387px;width:2589px;height:936px"><div class="t" style="left:831.6px;top:587.7px;font-size:24px;line-height:24px;color:#e2e2e2;transform:scaleX(1.0184);">&amp;1%1.pdf</div></div></div>
<div class="a" style="left:117px;top:387px;width:1268px;height:549px;overflow:hidden"><div style="position:absolute;left:-117px;top:-387px;width:2589px;height:936px"><div class="t" style="left:1015.4px;top:587.7px;font-size:24px;line-height:24px;color:#d6d6d6;transform:scaleX(0.9962);">2022/03/17 16:23</div></div></div>
<svg class="a" style="left:156px;top:622.3px;" width="32" height="34" viewBox="0 0 32 34">
<defs><linearGradient id="pg" x1="0" y1="0" x2="1" y2="1"><stop offset="0" stop-color="#f2f2f2"/><stop offset="1" stop-color="#ffffff"/></linearGradient></defs>
<path d="M7 1.5H24.2L30 7.3V32H7Z" fill="url(#pg)"/>
<path d="M24.2 1.5V7.3H30Z" fill="#dcdcdc"/>
<rect x="1" y="3.7" width="21" height="8.2" fill="#e0220c"/>
<text x="5.6" y="10.6" font-size="6.8" font-weight="bold" font-family="Liberation Sans" fill="#fff" letter-spacing="0.2">PDF</text>
<path d="M14 27.5C16 24 18.5 20 19 16.5C19.3 14.5 17.8 14.5 17.8 16.5C17.8 20 20.5 23 24.5 23.5C26 23.7 26 22.5 24.5 22.5C20 22.5 16 25 14 27.5Z" fill="none" stroke="#e02a1a" stroke-width="1.1"/>
</svg>
<div class="a" style="left:117px;top:387px;width:1268px;height:549px;overflow:hidden"><div style="position:absolute;left:-117px;top:-387px;width:2589px;height:936px"><div class="t" style="left:184.4px;top:629.5px;font-size:24px;line-height:24px;color:#e2e2e2;transform:scaleX(0.9704);">【NG】</div></div></div>
<div class="a" style="left:117px;top:387px;width:1268px;height:549px;overflow:hidden"><div style="position:absolute;left:-117px;top:-387px;width:2589px;height:936px"><div class="t" style="left:254.5px;top:629.5px;font-size:24px;line-height:24px;color:#e2e2e2;transform:scaleX(0.9310);">1章_TP-JL350UV SAI</div></div></div>
<div class="a" style="left:117px;top:387px;width:1268px;height:549px;overflow:hidden"><div style="position:absolute;left:-117px;top:-387px;width:2589px;height:936px"><div class="t" style="left:469.3px;top:629.5px;font-size:24px;line-height:24px;color:#e2e2e2;transform:scaleX(0.7965);">運用マニュアル</div></div></div>
<div class="a" style="left:117px;top:387px;width:1268px;height:549px;overflow:hidden"><div style="position:absolute;left:-117px;top:-387px;width:2589px;height:936px"><div class="t" style="left:613.8px;top:629.5px;font-size:24px;line-height:24px;color:#e2e2e2;transform:scaleX(1.0094);">9.pdf</div></div></div>
<div class="a" style="left:117px;top:387px;width:1268px;height:549px;overflow:hidden"><div style="position:absolute;left:-117px;top:-387px;width:2589px;height:936px"><div class="t" style="left:651.3px;top:629.5px;font-size:24px;line-height:24px;color:#e2e2e2;transform:scaleX(1.3000);">【</div></div></div>
<div class="a" style="left:117px;top:387px;width:1268px;height:549px;overflow:hidden"><div style="position:absolute;left:-117px;top:-387px;width:2589px;height:936px"><div class="t" style="left:679.4px;top:629.5px;font-size:24px;line-height:24px;color:#e2e2e2;transform:scaleX(0.9531);">220317_1623</div></div></div>
<div class="a" style="left:117px;top:387px;width:1268px;height:549px;overflow:hidden"><div style="position:absolute;left:-117px;top:-387px;width:2589px;height:936px"><div class="t" style="left:817.0px;top:629.5px;font-size:24px;line-height:24px;color:#e2e2e2;transform:scaleX(1.3000);">】</div></div></div>
<div class="a" style="left:117px;top:387px;width:1268px;height:549px;overflow:hidden"><div style="position:absolute;left:-117px;top:-387px;width:2589px;height:936px"><div class="t" style="left:831.6px;top:629.5px;font-size:24px;line-height:24px;color:#e2e2e2;transform:scaleX(1.0184);">&amp;1%1.pdf</div></div></div>
<div class="a" style="left:117px;top:387px;width:1268px;height:549px;overflow:hidden"><div style="position:absolute;left:-117px;top:-387px;width:2589px;height:936px"><div class="t" style="left:1015.4px;top:629.5px;font-size:24px;line-height:24px;color:#d6d6d6;transform:scaleX(0.9962);">2022/03/17 16:23</div></div></div>
<svg class="a" style="left:156px;top:664.1px;" width="32" height="34" viewBox="0 0 32 34">
<defs><linearGradient id="pg" x1="0" y1="0" x2="1" y2="1"><stop offset="0" stop-color="#f2f2f2"/><stop offset="1" stop-color="#ffffff"/></linearGradient></defs>
<path d="M7 1.5H24.2L30 7.3V32H7Z" fill="url(#pg)"/>
<path d="M24.2 1.5V7.3H30Z" fill="#dcdcdc"/>
<rect x="1" y="3.7" width="21" height="8.2" fill="#e0220c"/>
<text x="5.6" y="10.6" font-size="6.8" font-weight="bold" font-family="Liberation Sans" fill="#fff" letter-spacing="0.2">PDF</text>
<path d="M14 27.5C16 24 18.5 20 19 16.5C19.3 14.5 17.8 14.5 17.8 16.5C17.8 20 20.5 23 24.5 23.5C26 23.7 26 22.5 24.5 22.5C20 22.5 16 25 14 27.5Z" fill="none" stroke="#e02a1a" stroke-width="1.1"/>
</svg>
<div class="a" style="left:117px;top:387px;width:1268px;height:549px;overflow:hidden"><div style="position:absolute;left:-117px;top:-387px;width:2589px;height:936px"><div class="t" style="left:184.4px;top:671.3px;font-size:24px;line-height:24px;color:#e2e2e2;transform:scaleX(0.9704);">【NG】</div></div></div>
<div class="a" style="left:117px;top:387px;width:1268px;height:549px;overflow:hidden"><div style="position:absolute;left:-117px;top:-387px;width:2589px;height:936px"><div class="t" style="left:254.5px;top:671.3px;font-size:24px;line-height:24px;color:#e2e2e2;transform:scaleX(0.9310);">1章_TP-JL350UV SAI</div></div></div>
<div class="a" style="left:117px;top:387px;width:1268px;height:549px;overflow:hidden"><div style="position:absolute;left:-117px;top:-387px;width:2589px;height:936px"><div class="t" style="left:469.3px;top:671.3px;font-size:24px;line-height:24px;color:#e2e2e2;transform:scaleX(0.7965);">運用マニュアル</div></div></div>
<div class="a" style="left:117px;top:387px;width:1268px;height:549px;overflow:hidden"><div style="position:absolute;left:-117px;top:-387px;width:2589px;height:936px"><div class="t" style="left:612.7px;top:671.3px;font-size:24px;line-height:24px;color:#e2e2e2;transform:scaleX(1.0556);">11.pdf</div></div></div>
<div class="a" style="left:117px;top:387px;width:1268px;height:549px;overflow:hidden"><div style="position:absolute;left:-117px;top:-387px;width:2589px;height:936px"><div class="t" style="left:664.3px;top:671.3px;font-size:24px;line-height:24px;color:#e2e2e2;transform:scaleX(1.3000);">【</div></div></div>
<div class="a" style="left:117px;top:387px;width:1268px;height:549px;overflow:hidden"><div style="position:absolute;left:-117px;top:-387px;width:2589px;height:936px"><div class="t" style="left:692.4px;top:671.3px;font-size:24px;line-height:24px;color:#e2e2e2;transform:scaleX(0.9531);">220317_1623</div></div></div>
<div class="a" style="left:117px;top:387px;width:1268px;height:549px;overflow:hidden"><div style="position:absolute;left:-117px;top:-387px;width:2589px;height:936px"><div class="t" style="left:830.0px;top:671.3px;font-size:24px;line-height:24px;color:#e2e2e2;transform:scaleX(1.3000);">】</div></div></div>
<div class="a" style="left:117px;top:387px;width:1268px;height:549px;overflow:hidden"><div style="position:absolute;left:-117px;top:-387px;width:2589px;height:936px"><div class="t" style="left:844.6px;top:671.3px;font-size:24px;line-height:24px;color:#e2e2e2;transform:scaleX(1.0184);">&amp;1%1.pdf</div></div></div>
<div class="a" style="left:117px;top:387px;width:1268px;height:549px;overflow:hidden"><div style="position:absolute;left:-117px;top:-387px;width:2589px;height:936px"><div class="t" style="left:1015.4px;top:671.3px;font-size:24px;line-height:24px;color:#d6d6d6;transform:scaleX(0.9962);">2022/03/17 16:23</div></div></div>
<svg class="a" style="left:156px;top:705.9px;" width="32" height="34" viewBox="0 0 32 34">
<defs><linearGradient id="pg" x1="0" y1="0" x2="1" y2="1"><stop offset="0" stop-color="#f2f2f2"/><stop offset="1" stop-color="#ffffff"/></linearGradient></defs>
<path d="M7 1.5H24.2L30 7.3V32H7Z" fill="url(#pg)"/>
<path d="M24.2 1.5V7.3H30Z" fill="#dcdcdc"/>
<rect x="1" y="3.7" width="21" height="8.2" fill="#e0220c"/>
<text x="5.6" y="10.6" font-size="6.8" font-weight="bold" font-family="Liberation Sans" fill="#fff" letter-spacing="0.2">PDF</text>
<path d="M14 27.5C16 24 18.5 20 19 16.5C19.3 14.5 17.8 14.5 17.8 16.5C17.8 20 20.5 23 24.5 23.5C26 23.7 26 22.5 24.5 22.5C20 22.5 16 25 14 27.5Z" fill="none" stroke="#e02a1a" stroke-width="1.1"/>
</svg>
<div class="a" style="left:117px;top:387px;width:1268px;height:549px;overflow:hidden"><div style="position:absolute;left:-117px;top:-387px;width:2589px;height:936px"><div class="t" style="left:184.4px;top:713.1px;font-size:24px;line-height:24px;color:#e2e2e2;transform:scaleX(0.9704);">【NG】</div></div></div>
<div class="a" style="left:117px;top:387px;width:1268px;height:549px;overflow:hidden"><div style="position:absolute;left:-117px;top:-387px;width:2589px;height:936px"><div class="t" style="left:254.5px;top:713.1px;font-size:24px;line-height:24px;color:#e2e2e2;transform:scaleX(0.9310);">1章_TP-JL350UV SAI</div></div></div>
<div class="a" style="left:117px;top:387px;width:1268px;height:549px;overflow:hidden"><div style="position:absolute;left:-117px;top:-387px;width:2589px;height:936px"><div class="t" style="left:469.3px;top:713.1px;font-size:24px;line-height:24px;color:#e2e2e2;transform:scaleX(0.7965);">運用マニュアル</div></div></div>
<div class="a" style="left:117px;top:387px;width:1268px;height:549px;overflow:hidden"><div style="position:absolute;left:-117px;top:-387px;width:2589px;height:936px"><div class="t" style="left:612.8px;top:713.1px;font-size:24px;line-height:24px;color:#e2e2e2;transform:scaleX(1.0231);">13.pdf</div></div></div>
<div class="a" style="left:117px;top:387px;width:1268px;height:549px;overflow:hidden"><div style="position:absolute;left:-117px;top:-387px;width:2589px;height:936px"><div class="t" style="left:664.3px;top:713.1px;font-size:24px;line-height:24px;color:#e2e2e2;transform:scaleX(1.3000);">【</div></div></div>
<div class="a" style="left:117px;top:387px;width:1268px;height:549px;overflow:hidden"><div style="position:absolute;left:-117px;top:-387px;width:2589px;height:936px"><div class="t" style="left:692.4px;top:713.1px;font-size:24px;line-height:24px;color:#e2e2e2;transform:scaleX(0.9531);">220317_1623</div></div></div>
<div class="a" style="left:117px;top:387px;width:1268px;height:549px;overflow:hidden"><div style="position:absolute;left:-117px;top:-387px;width:2589px;height:936px"><div class="t" style="left:830.0px;top:713.1px;font-size:24px;line-height:24px;color:#e2e2e2;transform:scaleX(1.3000);">】</div></div></div>
<div class="a" style="left:117px;top:387px;width:1268px;height:549px;overflow:hidden"><div style="position:absolute;left:-117px;top:-387px;width:2589px;height:936px"><div class="t" style="left:844.6px;top:713.1px;font-size:24px;line-height:24px;color:#e2e2e2;transform:scaleX(1.0184);">&amp;1%1.pdf</div></div></div>
<div class="a" style="left:117px;top:387px;width:1268px;height:549px;overflow:hidden"><div style="position:absolute;left:-117px;top:-387px;width:2589px;height:936px"><div class="t" style="left:1015.4px;top:713.1px;font-size:24px;line-height:24px;color:#d6d6d6;transform:scaleX(0.9962);">2022/03/17 16:23</div></div></div>
<svg class="a" style="left:156px;top:747.7px;" width="32" height="34" viewBox="0 0 32 34">
<defs><linearGradient id="pg" x1="0" y1="0" x2="1" y2="1"><stop offset="0" stop-color="#f2f2f2"/><stop offset="1" stop-color="#ffffff"/></linearGradient></defs>
<path d="M7 1.5H24.2L30 7.3V32H7Z" fill="url(#pg)"/>
<path d="M24.2 1.5V7.3H30Z" fill="#dcdcdc"/>
<rect x="1" y="3.7" width="21" height="8.2" fill="#e0220c"/>
<text x="5.6" y="10.6" font-size="6.8" font-weight="bold" font-family="Liberation Sans" fill="#fff" letter-spacing="0.2">PDF</text>
<path d="M14 27.5C16 24 18.5 20 19 16.5C19.3 14.5 17.8 14.5 17.8 16.5C17.8 20 20.5 23 24.5 23.5C26 23.7 26 22.5 24.5 22.5C20 22.5 16 25 14 27.5Z" fill="none" stroke="#e02a1a" stroke-width="1.1"/>
</svg>
<div class="a" style="left:117px;top:387px;width:1268px;height:549px;overflow:hidden"><div style="position:absolute;left:-117px;top:-387px;width:2589px;height:936px"><div class="t" style="left:184.4px;top:754.9px;font-size:24px;line-height:24px;color:#e2e2e2;transform:scaleX(0.9704);">【NG】</div></div></div>
<div class="a" style="left:117px;top:387px;width:1268px;height:549px;overflow:hidden"><div style="position:absolute;left:-117px;top:-387px;width:2589px;height:936px"><div class="t" style="left:254.5px;top:754.9px;font-size:24px;line-height:24px;color:#e2e2e2;transform:scaleX(0.9310);">1章_TP-JL350UV SAI</div></div></div>
<div class="a" style="left:117px;top:387px;width:1268px;height:549px;overflow:hidden"><div style="position:absolute;left:-117px;top:-387px;width:2589px;height:936px"><div class="t" style="left:469.3px;top:754.9px;font-size:24px;line-height:24px;color:#e2e2e2;transform:scaleX(0.7965);">運用マニュアル</div></div></div>
<div class="a" style="left:117px;top:387px;width:1268px;height:549px;overflow:hidden"><div style="position:absolute;left:-117px;top:-387px;width:2589px;height:936px"><div class="t" style="left:612.8px;top:754.9px;font-size:24px;line-height:24px;color:#e2e2e2;transform:scaleX(1.0231);">14.pdf</div></div></div>
<div class="a" style="left:117px;top:387px;width:1268px;height:549px;overflow:hidden"><div style="position:absolute;left:-117px;top:-387px;width:2589px;height:936px"><div class="t" style="left:664.3px;top:754.9px;font-size:24px;line-height:24px;color:#e2e2e2;transform:scaleX(1.3000);">【</div></div></div>
<div class="a" style="left:117px;top:387px;width:1268px;height:549px;overflow:hidden"><div style="position:absolute;left:-117px;top:-387px;width:2589px;height:936px"><div class="t" style="left:692.4px;top:754.9px;font-size:24px;line-height:24px;color:#e2e2e2;transform:scaleX(0.9531);">220317_1623</div></div></div>
<div class="a" style="left:117px;top:387px;width:1268px;height:549px;overflow:hidden"><div style="position:absolute;left:-117px;top:-387px;width:2589px;height:936px"><div class="t" style="left:830.0px;top:754.9px;font-size:24px;line-height:24px;color:#e2e2e2;transform:scaleX(1.3000);">】</div></div></div>
<div class="a" style="left:117px;top:387px;width:1268px;height:549px;overflow:hidden"><div style="position:absolute;left:-117px;top:-387px;width:2589px;height:936px"><div class="t" style="left:844.6px;top:754.9px;font-size:24px;line-height:24px;color:#e2e2e2;transform:scaleX(1.0184);">&amp;1%1.pdf</div></div></div>
<div class="a" style="left:117px;top:387px;width:1268px;height:549px;overflow:hidden"><div style="position:absolute;left:-117px;top:-387px;width:2589px;height:936px"><div class="t" style="left:1015.4px;top:754.9px;font-size:24px;line-height:24px;color:#d6d6d6;transform:scaleX(0.9962);">2022/03/17 16:23</div></div></div>
<svg class="a" style="left:156px;top:789.5px;" width="32" height="34" viewBox="0 0 32 34">
<defs><linearGradient id="pg" x1="0" y1="0" x2="1" y2="1"><stop offset="0" stop-color="#f2f2f2"/><stop offset="1" stop-color="#ffffff"/></linearGradient></defs>
<path d="M7 1.5H24.2L30 7.3V32H7Z" fill="url(#pg)"/>
<path d="M24.2 1.5V7.3H30Z" fill="#dcdcdc"/>
<rect x="1" y="3.7" width="21" height="8.2" fill="#e0220c"/>
<text x="5.6" y="10.6" font-size="6.8" font-weight="bold" font-family="Liberation Sans" fill="#fff" letter-spacing="0.2">PDF</text>
<path d="M14 27.5C16 24 18.5 20 19 16.5C19.3 14.5 17.8 14.5 17.8 16.5C17.8 20 20.5 23 24.5 23.5C26 23.7 26 22.5 24.5 22.5C20 22.5 16 25 14 27.5Z" fill="none" stroke="#e02a1a" stroke-width="1.1"/>
</svg>
<div class="a" style="left:117px;top:387px;width:1268px;height:549px;overflow:hidden"><div style="position:absolute;left:-117px;top:-387px;width:2589px;height:936px"><div class="t" style="left:184.4px;top:796.7px;font-size:24px;line-height:24px;color:#e2e2e2;transform:scaleX(0.9704);">【NG】</div></div></div>
<div class="a" style="left:117px;top:387px;width:1268px;height:549px;overflow:hidden"><div style="position:absolute;left:-117px;top:-387px;width:2589px;height:936px"><div class="t" style="left:254.8px;top:796.7px;font-size:24px;line-height:24px;color:#e2e2e2;transform:scaleX(0.9148);">1章_TP-JL350UV_SAI</div></div></div>
<div class="a" style="left:117px;top:387px;width:1268px;height:549px;overflow:hidden"><div style="position:absolute;left:-117px;top:-387px;width:2589px;height:936px"><div class="t" style="left:472.3px;top:796.7px;font-size:24px;line-height:24px;color:#e2e2e2;transform:scaleX(0.7877);">運用マニュアル</div></div></div>
<div class="a" style="left:117px;top:387px;width:1268px;height:549px;overflow:hidden"><div style="position:absolute;left:-117px;top:-387px;width:2589px;height:936px"><div class="t" style="left:610.0px;top:796.7px;font-size:24px;line-height:24px;color:#e2e2e2;transform:scaleX(0.9627);">_2.pdf</div></div></div>
<div class="a" style="left:117px;top:387px;width:1268px;height:549px;overflow:hidden"><div style="position:absolute;left:-117px;top:-387px;width:2589px;height:936px"><div class="t" style="left:657.5px;top:796.7px;font-size:24px;line-height:24px;color:#e2e2e2;transform:scaleX(1.3000);">【</div></div></div>
<div class="a" style="left:117px;top:387px;width:1268px;height:549px;overflow:hidden"><div style="position:absolute;left:-117px;top:-387px;width:2589px;height:936px"><div class="t" style="left:685.6px;top:796.7px;font-size:24px;line-height:24px;color:#e2e2e2;transform:scaleX(0.9531);">220317_1623</div></div></div>
<div class="a" style="left:117px;top:387px;width:1268px;height:549px;overflow:hidden"><div style="position:absolute;left:-117px;top:-387px;width:2589px;height:936px"><div class="t" style="left:823.2px;top:796.7px;font-size:24px;line-height:24px;color:#e2e2e2;transform:scaleX(1.3000);">】</div></div></div>
<div class="a" style="left:117px;top:387px;width:1268px;height:549px;overflow:hidden"><div style="position:absolute;left:-117px;top:-387px;width:2589px;height:936px"><div class="t" style="left:837.8px;top:796.7px;font-size:24px;line-height:24px;color:#e2e2e2;transform:scaleX(1.0184);">&amp;1%1.pdf</div></div></div>
<div class="a" style="left:117px;top:387px;width:1268px;height:549px;overflow:hidden"><div style="position:absolute;left:-117px;top:-387px;width:2589px;height:936px"><div class="t" style="left:1015.4px;top:796.7px;font-size:24px;line-height:24px;color:#d6d6d6;transform:scaleX(0.9962);">2022/03/17 16:24</div></div></div>
<svg class="a" style="left:156px;top:831.3px;" width="32" height="34" viewBox="0 0 32 34">
<defs><linearGradient id="pg" x1="0" y1="0" x2="1" y2="1"><stop offset="0" stop-color="#f2f2f2"/><stop offset="1" stop-color="#ffffff"/></linearGradient></defs>
<path d="M7 1.5H24.2L30 7.3V32H7Z" fill="url(#pg)"/>
<path d="M24.2 1.5V7.3H30Z" fill="#dcdcdc"/>
<rect x="1" y="3.7" width="21" height="8.2" fill="#e0220c"/>
<text x="5.6" y="10.6" font-size="6.8" font-weight="bold" font-family="Liberation Sans" fill="#fff" letter-spacing="0.2">PDF</text>
<path d="M14 27.5C16 24 18.5 20 19 16.5C19.3 14.5 17.8 14.5 17.8 16.5C17.8 20 20.5 23 24.5 23.5C26 23.7 26 22.5 24.5 22.5C20 22.5 16 25 14 27.5Z" fill="none" stroke="#e02a1a" stroke-width="1.1"/>
</svg>
<div class="a" style="left:117px;top:387px;width:1268px;height:549px;overflow:hidden"><div style="position:absolute;left:-117px;top:-387px;width:2589px;height:936px"><div class="t" style="left:184.1px;top:838.5px;font-size:24px;line-height:24px;color:#e2e2e2;transform:scaleX(0.9434);">【OK】</div></div></div>
<div class="a" style="left:117px;top:387px;width:1268px;height:549px;overflow:hidden"><div style="position:absolute;left:-117px;top:-387px;width:2589px;height:936px"><div class="t" style="left:251.4px;top:838.5px;font-size:24px;line-height:24px;color:#e2e2e2;transform:scaleX(0.9310);">1章_TP-JL350UV SAI</div></div></div>
<div class="a" style="left:117px;top:387px;width:1268px;height:549px;overflow:hidden"><div style="position:absolute;left:-117px;top:-387px;width:2589px;height:936px"><div class="t" style="left:466.2px;top:838.5px;font-size:24px;line-height:24px;color:#e2e2e2;transform:scaleX(0.7965);">運用マニュアル</div></div></div>
<div class="a" style="left:117px;top:387px;width:1268px;height:549px;overflow:hidden"><div style="position:absolute;left:-117px;top:-387px;width:2589px;height:936px"><div class="t" style="left:611.7px;top:838.5px;font-size:24px;line-height:24px;color:#e2e2e2;transform:scaleX(0.9907);">4.pdf</div></div></div>
<div class="a" style="left:117px;top:387px;width:1268px;height:549px;overflow:hidden"><div style="position:absolute;left:-117px;top:-387px;width:2589px;height:936px"><div class="t" style="left:648.2px;top:838.5px;font-size:24px;line-height:24px;color:#e2e2e2;transform:scaleX(1.3000);">【</div></div></div>
<div class="a" style="left:117px;top:387px;width:1268px;height:549px;overflow:hidden"><div style="position:absolute;left:-117px;top:-387px;width:2589px;height:936px"><div class="t" style="left:676.3px;top:838.5px;font-size:24px;line-height:24px;color:#e2e2e2;transform:scaleX(0.9531);">220317_1623</div></div></div>
<div class="a" style="left:117px;top:387px;width:1268px;height:549px;overflow:hidden"><div style="position:absolute;left:-117px;top:-387px;width:2589px;height:936px"><div class="t" style="left:813.9px;top:838.5px;font-size:24px;line-height:24px;color:#e2e2e2;transform:scaleX(1.3000);">】</div></div></div>
<div class="a" style="left:117px;top:387px;width:1268px;height:549px;overflow:hidden"><div style="position:absolute;left:-117px;top:-387px;width:2589px;height:936px"><div class="t" style="left:828.9px;top:838.5px;font-size:24px;line-height:24px;color:#e2e2e2;transform:scaleX(1.0342);">.pdf</div></div></div>
<div class="a" style="left:117px;top:387px;width:1268px;height:549px;overflow:hidden"><div style="position:absolute;left:-117px;top:-387px;width:2589px;height:936px"><div class="t" style="left:1015.4px;top:838.5px;font-size:24px;line-height:24px;color:#d6d6d6;transform:scaleX(0.9962);">2022/03/17 16:23</div></div></div>
<svg class="a" style="left:156px;top:873.1px;" width="32" height="34" viewBox="0 0 32 34">
<defs><linearGradient id="pg" x1="0" y1="0" x2="1" y2="1"><stop offset="0" stop-color="#f2f2f2"/><stop offset="1" stop-color="#ffffff"/></linearGradient></defs>
<path d="M7 1.5H24.2L30 7.3V32H7Z" fill="url(#pg)"/>
<path d="M24.2 1.5V7.3H30Z" fill="#dcdcdc"/>
<rect x="1" y="3.7" width="21" height="8.2" fill="#e0220c"/>
<text x="5.6" y="10.6" font-size="6.8" font-weight="bold" font-family="Liberation Sans" fill="#fff" letter-spacing="0.2">PDF</text>
<path d="M14 27.5C16 24 18.5 20 19 16.5C19.3 14.5 17.8 14.5 17.8 16.5C17.8 20 20.5 23 24.5 23.5C26 23.7 26 22.5 24.5 22.5C20 22.5 16 25 14 27.5Z" fill="none" stroke="#e02a1a" stroke-width="1.1"/>
</svg>
<div class="a" style="left:117px;top:387px;width:1268px;height:549px;overflow:hidden"><div style="position:absolute;left:-117px;top:-387px;width:2589px;height:936px"><div class="t" style="left:184.1px;top:880.3px;font-size:24px;line-height:24px;color:#e2e2e2;transform:scaleX(0.9434);">【OK】</div></div></div>
<div class="a" style="left:117px;top:387px;width:1268px;height:549px;overflow:hidden"><div style="position:absolute;left:-117px;top:-387px;width:2589px;height:936px"><div class="t" style="left:251.4px;top:880.3px;font-size:24px;line-height:24px;color:#e2e2e2;transform:scaleX(0.9310);">1章_TP-JL350UV SAI</div></div></div>
<div class="a" style="left:117px;top:387px;width:1268px;height:549px;overflow:hidden"><div style="position:absolute;left:-117px;top:-387px;width:2589px;height:936px"><div class="t" style="left:466.2px;top:880.3px;font-size:24px;line-height:24px;color:#e2e2e2;transform:scaleX(0.7965);">運用マニュアル</div></div></div>
<div class="a" style="left:117px;top:387px;width:1268px;height:549px;overflow:hidden"><div style="position:absolute;left:-117px;top:-387px;width:2589px;height:936px"><div class="t" style="left:610.7px;top:880.3px;font-size:24px;line-height:24px;color:#e2e2e2;transform:scaleX(1.0094);">8.pdf</div></div></div>
<div class="a" style="left:117px;top:387px;width:1268px;height:549px;overflow:hidden"><div style="position:absolute;left:-117px;top:-387px;width:2589px;height:936px"><div class="t" style="left:648.2px;top:880.3px;font-size:24px;line-height:24px;color:#e2e2e2;transform:scaleX(1.3000);">【</div></div></div>
<div class="a" style="left:117px;top:387px;width:1268px;height:549px;overflow:hidden"><div style="position:absolute;left:-117px;top:-387px;width:2589px;height:936px"><div class="t" style="left:676.3px;top:880.3px;font-size:24px;line-height:24px;color:#e2e2e2;transform:scaleX(0.9531);">220317_1623</div></div></div>
<div class="a" style="left:117px;top:387px;width:1268px;height:549px;overflow:hidden"><div style="position:absolute;left:-117px;top:-387px;width:2589px;height:936px"><div class="t" style="left:813.9px;top:880.3px;font-size:24px;line-height:24px;color:#e2e2e2;transform:scaleX(1.3000);">】</div></div></div>
<div class="a" style="left:117px;top:387px;width:1268px;height:549px;overflow:hidden"><div style="position:absolute;left:-117px;top:-387px;width:2589px;height:936px"><div class="t" style="left:828.9px;top:880.3px;font-size:24px;line-height:24px;color:#e2e2e2;transform:scaleX(1.0342);">.pdf</div></div></div>
<div class="a" style="left:117px;top:387px;width:1268px;height:549px;overflow:hidden"><div style="position:absolute;left:-117px;top:-387px;width:2589px;height:936px"><div class="t" style="left:1015.4px;top:880.3px;font-size:24px;line-height:24px;color:#d6d6d6;transform:scaleX(0.9962);">2022/03/17 16:23</div></div></div>
<svg class="a" style="left:156px;top:914.9px;" width="32" height="34" viewBox="0 0 32 34">
<defs><linearGradient id="pg" x1="0" y1="0" x2="1" y2="1"><stop offset="0" stop-color="#f2f2f2"/><stop offset="1" stop-color="#ffffff"/></linearGradient></defs>
<path d="M7 1.5H24.2L30 7.3V32H7Z" fill="url(#pg)"/>
<path d="M24.2 1.5V7.3H30Z" fill="#dcdcdc"/>
<rect x="1" y="3.7" width="21" height="8.2" fill="#e0220c"/>
<text x="5.6" y="10.6" font-size="6.8" font-weight="bold" font-family="Liberation Sans" fill="#fff" letter-spacing="0.2">PDF</text>
<path d="M14 27.5C16 24 18.5 20 19 16.5C19.3 14.5 17.8 14.5 17.8 16.5C17.8 20 20.5 23 24.5 23.5C26 23.7 26 22.5 24.5 22.5C20 22.5 16 25 14 27.5Z" fill="none" stroke="#e02a1a" stroke-width="1.1"/>
</svg>
<div class="a" style="left:117px;top:387px;width:1268px;height:549px;overflow:hidden"><div style="position:absolute;left:-117px;top:-387px;width:2589px;height:936px"><div class="t" style="left:184.1px;top:922.1px;font-size:24px;line-height:24px;color:#e2e2e2;transform:scaleX(0.9434);">【OK】</div></div></div>
<div class="a" style="left:117px;top:387px;width:1268px;height:549px;overflow:hidden"><div style="position:absolute;left:-117px;top:-387px;width:2589px;height:936px"><div class="t" style="left:251.4px;top:922.1px;font-size:24px;line-height:24px;color:#e2e2e2;transform:scaleX(0.9310);">1章_TP-JL350UV SAI</div></div></div>
<div class="a" style="left:117px;top:387px;width:1268px;height:549px;overflow:hidden"><div style="position:absolute;left:-117px;top:-387px;width:2589px;height:936px"><div class="t" style="left:466.2px;top:922.1px;font-size:24px;line-height:24px;color:#e2e2e2;transform:scaleX(0.7965);">運用マニュアル</div></div></div>
<div class="a" style="left:117px;top:387px;width:1268px;height:549px;overflow:hidden"><div style="position:absolute;left:-117px;top:-387px;width:2589px;height:936px"><div class="t" style="left:609.7px;top:922.1px;font-size:24px;line-height:24px;color:#e2e2e2;transform:scaleX(1.0231);">10.pdf</div></div></div>
<div class="a" style="left:117px;top:387px;width:1268px;height:549px;overflow:hidden"><div style="position:absolute;left:-117px;top:-387px;width:2589px;height:936px"><div class="t" style="left:661.2px;top:922.1px;font-size:24px;line-height:24px;color:#e2e2e2;transform:scaleX(1.3000);">【</div></div></div>
<div class="a" style="left:117px;top:387px;width:1268px;height:549px;overflow:hidden"><div style="position:absolute;left:-117px;top:-387px;width:2589px;height:936px"><div class="t" style="left:689.3px;top:922.1px;font-size:24px;line-height:24px;color:#e2e2e2;transform:scaleX(0.9531);">220317_1623</div></div></div>
<div class="a" style="left:117px;top:387px;width:1268px;height:549px;overflow:hidden"><div style="position:absolute;left:-117px;top:-387px;width:2589px;height:936px"><div class="t" style="left:826.9px;top:922.1px;font-size:24px;line-height:24px;color:#e2e2e2;transform:scaleX(1.3000);">】</div></div></div>
<div class="a" style="left:117px;top:387px;width:1268px;height:549px;overflow:hidden"><div style="position:absolute;left:-117px;top:-387px;width:2589px;height:936px"><div class="t" style="left:841.9px;top:922.1px;font-size:24px;line-height:24px;color:#e2e2e2;transform:scaleX(1.0342);">.pdf</div></div></div>
<div class="a" style="left:117px;top:387px;width:1268px;height:549px;overflow:hidden"><div style="position:absolute;left:-117px;top:-387px;width:2589px;height:936px"><div class="t" style="left:1015.4px;top:922.1px;font-size:24px;line-height:24px;color:#d6d6d6;transform:scaleX(0.9962);">2022/03/17 16:23</div></div></div>
<div class="a" style="left:1419px;top:0px;width:1170px;height:2px;background:#222222;"></div>
<div class="a" style="left:1419px;top:2px;width:1170px;height:59px;background:#ffffff;"></div>
<div class="a" style="left:2588px;top:0px;width:1px;height:61px;background:#2a2a2a;"></div>
<div class="a" style="left:1419px;top:61px;width:1170px;height:875px;background:#f1f3f2;"></div>
<div class="a" style="left:1419px;top:2px;width:22px;height:934px;background:linear-gradient(to right,rgba(0,0,0,0.2),rgba(0,0,0,0.09) 25%,rgba(0,0,0,0.035) 55%,rgba(0,0,0,0))"></div>
<svg class="a" style="left:1433px;top:17px;" width="32" height="27" viewBox="0 0 32 27">
<rect x="1" y="1" width="29" height="24" fill="#f4f4f4" stroke="#9a9a9a" stroke-width="1.2"/>
<rect x="1.5" y="1.5" width="28" height="3" fill="#d9d9d9"/>
<defs><linearGradient id="ig" x1="0" y1="0" x2="1" y2="1"><stop offset="0" stop-color="#3d7db8"/><stop offset="1" stop-color="#4fb36a"/></linearGradient></defs>
<rect x="4" y="7" width="12" height="15" fill="url(#ig)"/>
<rect x="18" y="7" width="6" height="2" fill="#c6c6c6"/><rect x="18" y="11" width="6" height="2" fill="#c6c6c6"/><rect x="18" y="15" width="6" height="2" fill="#c6c6c6"/><rect x="18" y="19" width="6" height="2" fill="#c6c6c6"/>
<rect x="26" y="6" width="2.5" height="9" fill="#4c8ed0"/>
</svg>
<div class="t" style="left:1470.1px;top:19.2px;font-size:25.5px;line-height:25.5px;color:#939393;transform:scaleX(0.8729);">CSRender</div>
<svg class="a" style="left:2345px;top:28px;" width="24" height="6" viewBox="0 0 24 6"><path d="M2 3H22" stroke="#8c8c8c" stroke-width="1.6"/></svg>
<svg class="a" style="left:2436px;top:19px;" width="24" height="24" viewBox="0 0 24 24"><rect x="2.8" y="2.8" width="18.4" height="18.4" fill="none" stroke="#8c8c8c" stroke-width="1.6"/></svg>
<svg class="a" style="left:2529px;top:19px;" width="24" height="24" viewBox="0 0 24 24"><path d="M3 3L21 21M21 3L3 21" stroke="#8c8c8c" stroke-width="1.6"/></svg>
<div class="t" style="left:1444.8px;top:94.5px;font-size:26.86px;line-height:26.86px;color:#1e1e1e;transform:scaleX(0.8412);">対象フォルダ</div>
<svg class="a" style="left:1674.2px;top:99.8px;" width="6" height="17.5" viewBox="0 0 6 17.5"><circle cx="3" cy="2.5" r="2.2" fill="#111"/><circle cx="3" cy="15.0" r="2.2" fill="#111"/></svg>
<div class="a" style="left:1709px;top:88.2px;width:696px;height:46.999999999999986px;background:#ffffff;box-shadow:inset 0 0 0 1.6px #6c6c6c;"></div>
<div class="t" style="left:1713.9px;top:95.2px;font-size:28.5px;line-height:28.5px;color:#1e1e1e;transform:scaleX(0.8600);">C:</div>
<div class="t" style="left:1738.7px;top:95.2px;font-size:28.5px;line-height:28.5px;color:#1e1e1e;transform:scaleX(0.7812);">¥</div>
<div class="t" style="left:1752.7px;top:95.2px;font-size:28.5px;line-height:28.5px;color:#1e1e1e;transform:scaleX(0.8819);">Users</div>
<div class="t" style="left:1820.8px;top:95.2px;font-size:28.5px;line-height:28.5px;color:#1e1e1e;transform:scaleX(0.7812);">¥</div>
<div class="t" style="left:1835.2px;top:95.2px;font-size:28.5px;line-height:28.5px;color:#1e1e1e;transform:scaleX(0.8808);">EB030221</div>
<div class="t" style="left:1957.5px;top:95.2px;font-size:28.5px;line-height:28.5px;color:#1e1e1e;transform:scaleX(0.7812);">¥</div>
<div class="t" style="left:1971.4px;top:95.2px;font-size:28.5px;line-height:28.5px;color:#1e1e1e;transform:scaleX(0.9696);">Desktop</div>
<div class="t" style="left:2074.3px;top:95.2px;font-size:28.5px;line-height:28.5px;color:#1e1e1e;transform:scaleX(0.7812);">¥</div>
<div class="t" style="left:2090.8px;top:95.2px;font-size:28.5px;line-height:28.5px;color:#1e1e1e;transform:scaleX(0.9537);">fukami_test2</div>
<div class="t" style="left:2245.7px;top:95.2px;font-size:28.5px;line-height:28.5px;color:#1e1e1e;transform:scaleX(0.8000);">¥</div>
<div class="t" style="left:2260.7px;top:95.2px;font-size:28.5px;line-height:28.5px;color:#1e1e1e;transform:scaleX(0.6308);">1</div>
<div class="t" style="left:2276.0px;top:95.2px;font-size:28.5px;line-height:28.5px;color:#1e1e1e;transform:scaleX(0.8000);">¥</div>
<div class="t" style="left:2290.2px;top:95.2px;font-size:28.5px;line-height:28.5px;color:#1e1e1e;transform:scaleX(0.9122);">escape</div>
<div class="a" style="left:2433px;top:91.8px;width:129px;height:39.60000000000001px;background:#dddddd;box-shadow:inset 0 0 0 1.4px #787878;"></div>
<div class="t" style="left:2473.6px;top:101.7px;font-size:21.62px;line-height:21.62px;color:#1e1e1e;transform:scaleX(1.0833);">参照</div>
<div class="t" style="left:1435.8px;top:151.4px;font-size:26.71px;line-height:26.71px;color:#1e1e1e;transform:scaleX(0.7350);">リファレンスフォルダ</div>
<svg class="a" style="left:1674.2px;top:157px;" width="6" height="17" viewBox="0 0 6 17"><circle cx="3" cy="2.5" r="2.2" fill="#111"/><circle cx="3" cy="14.5" r="2.2" fill="#111"/></svg>
<div class="a" style="left:1709px;top:144.3px;width:696px;height:47.0px;background:#ffffff;box-shadow:inset 0 0 0 1.6px #6c6c6c;"></div>
<div class="t" style="left:1713.9px;top:151.2px;font-size:28.5px;line-height:28.5px;color:#1e1e1e;transform:scaleX(0.8600);">C:</div>
<div class="t" style="left:1738.7px;top:151.2px;font-size:28.5px;line-height:28.5px;color:#1e1e1e;transform:scaleX(0.7812);">¥</div>
<div class="t" style="left:1752.7px;top:151.2px;font-size:28.5px;line-height:28.5px;color:#1e1e1e;transform:scaleX(0.8819);">Users</div>
<div class="t" style="left:1820.8px;top:151.2px;font-size:28.5px;line-height:28.5px;color:#1e1e1e;transform:scaleX(0.7812);">¥</div>
<div class="t" style="left:1835.2px;top:151.2px;font-size:28.5px;line-height:28.5px;color:#1e1e1e;transform:scaleX(0.8808);">EB030221</div>
<div class="t" style="left:1957.5px;top:151.2px;font-size:28.5px;line-height:28.5px;color:#1e1e1e;transform:scaleX(0.7812);">¥</div>
<div class="t" style="left:1971.4px;top:151.2px;font-size:28.5px;line-height:28.5px;color:#1e1e1e;transform:scaleX(0.9696);">Desktop</div>
<div class="t" style="left:2074.3px;top:151.2px;font-size:28.5px;line-height:28.5px;color:#1e1e1e;transform:scaleX(0.7812);">¥</div>
<div class="t" style="left:2090.8px;top:151.2px;font-size:28.5px;line-height:28.5px;color:#1e1e1e;transform:scaleX(0.9537);">fukami_test2</div>
<div class="t" style="left:2245.7px;top:151.2px;font-size:28.5px;line-height:28.5px;color:#1e1e1e;transform:scaleX(0.8000);">¥</div>
<div class="t" style="left:2259.7px;top:151.2px;font-size:28.5px;line-height:28.5px;color:#1e1e1e;transform:scaleX(0.8000);">2</div>
<div class="t" style="left:2276.0px;top:151.2px;font-size:28.5px;line-height:28.5px;color:#1e1e1e;transform:scaleX(0.8000);">¥</div>
<div class="t" style="left:2290.2px;top:151.2px;font-size:28.5px;line-height:28.5px;color:#1e1e1e;transform:scaleX(0.9122);">escape</div>
<div class="a" style="left:2433px;top:147.9px;width:129px;height:39.599999999999994px;background:#dddddd;box-shadow:inset 0 0 0 1.4px #787878;"></div>
<div class="t" style="left:2473.6px;top:157.8px;font-size:21.62px;line-height:21.62px;color:#1e1e1e;transform:scaleX(1.0833);">参照</div>
<div class="t" style="left:1443.0px;top:210.4px;font-size:26.34px;line-height:26.34px;color:#1e1e1e;transform:scaleX(0.8541);">作業フォルダ</div>
<svg class="a" style="left:1674.2px;top:215.7px;" width="6" height="17.5" viewBox="0 0 6 17.5"><circle cx="3" cy="2.5" r="2.2" fill="#111"/><circle cx="3" cy="15.0" r="2.2" fill="#111"/></svg>
<div class="a" style="left:1709px;top:200px;width:696px;height:47px;background:#ffffff;box-shadow:inset 0 0 0 1.6px #6c6c6c;"></div>
<div class="t" style="left:1713.9px;top:207.4px;font-size:28.5px;line-height:28.5px;color:#1e1e1e;transform:scaleX(0.8600);">C:</div>
<div class="t" style="left:1738.7px;top:207.4px;font-size:28.5px;line-height:28.5px;color:#1e1e1e;transform:scaleX(0.7812);">¥</div>
<div class="t" style="left:1752.7px;top:207.4px;font-size:28.5px;line-height:28.5px;color:#1e1e1e;transform:scaleX(0.8819);">Users</div>
<div class="t" style="left:1820.8px;top:207.4px;font-size:28.5px;line-height:28.5px;color:#1e1e1e;transform:scaleX(0.7812);">¥</div>
<div class="t" style="left:1835.2px;top:207.4px;font-size:28.5px;line-height:28.5px;color:#1e1e1e;transform:scaleX(0.8808);">EB030221</div>
<div class="t" style="left:1957.5px;top:207.4px;font-size:28.5px;line-height:28.5px;color:#1e1e1e;transform:scaleX(0.7812);">¥</div>
<div class="t" style="left:1971.4px;top:207.4px;font-size:28.5px;line-height:28.5px;color:#1e1e1e;transform:scaleX(0.9696);">Desktop</div>
<div class="t" style="left:2074.3px;top:207.4px;font-size:28.5px;line-height:28.5px;color:#1e1e1e;transform:scaleX(0.7812);">¥</div>
<div class="t" style="left:2090.7px;top:207.4px;font-size:28.5px;line-height:28.5px;color:#1e1e1e;transform:scaleX(0.8761);">test</div>
<div class="t" style="left:2134.5px;top:207.4px;font-size:28.5px;line-height:28.5px;color:#1e1e1e;transform:scaleX(0.7812);">¥</div>
<div class="t" style="left:2150.0px;top:207.4px;font-size:28.5px;line-height:28.5px;color:#1e1e1e;transform:scaleX(0.9609);">test</div>
<div class="a" style="left:2433px;top:203.6px;width:129px;height:39.599999999999994px;background:#dddddd;box-shadow:inset 0 0 0 1.4px #787878;"></div>
<div class="t" style="left:2473.6px;top:213.5px;font-size:21.62px;line-height:21.62px;color:#1e1e1e;transform:scaleX(1.0833);">参照</div>
<div class="t" style="left:1440.4px;top:265.9px;font-size:26.96px;line-height:26.96px;color:#1e1e1e;transform:scaleX(0.8025);">レポート出力フォルダ</div>
<svg class="a" style="left:1674.2px;top:271.8px;" width="6" height="17.0" viewBox="0 0 6 17.0"><circle cx="3" cy="2.5" r="2.2" fill="#111"/><circle cx="3" cy="14.5" r="2.2" fill="#111"/></svg>
<div class="a" style="left:1709px;top:256.6px;width:696px;height:47.0px;background:#ffffff;box-shadow:inset 0 0 0 1.6px #6c6c6c;"></div>
<div class="t" style="left:1713.9px;top:263.4px;font-size:28.5px;line-height:28.5px;color:#1e1e1e;transform:scaleX(0.8600);">C:</div>
<div class="t" style="left:1738.7px;top:263.4px;font-size:28.5px;line-height:28.5px;color:#1e1e1e;transform:scaleX(0.7812);">¥</div>
<div class="t" style="left:1752.7px;top:263.4px;font-size:28.5px;line-height:28.5px;color:#1e1e1e;transform:scaleX(0.8819);">Users</div>
<div class="t" style="left:1820.8px;top:263.4px;font-size:28.5px;line-height:28.5px;color:#1e1e1e;transform:scaleX(0.7812);">¥</div>
<div class="t" style="left:1835.2px;top:263.4px;font-size:28.5px;line-height:28.5px;color:#1e1e1e;transform:scaleX(0.8808);">EB030221</div>
<div class="t" style="left:1957.5px;top:263.4px;font-size:28.5px;line-height:28.5px;color:#1e1e1e;transform:scaleX(0.7812);">¥</div>
<div class="t" style="left:1971.4px;top:263.4px;font-size:28.5px;line-height:28.5px;color:#1e1e1e;transform:scaleX(0.9696);">Desktop</div>
<div class="t" style="left:2074.3px;top:263.4px;font-size:28.5px;line-height:28.5px;color:#1e1e1e;transform:scaleX(0.7812);">¥</div>
<div class="t" style="left:2088.6px;top:263.4px;font-size:28.5px;line-height:28.5px;color:#1e1e1e;transform:scaleX(0.9449);">ReportTest</div>
<div class="a" style="left:2433px;top:260.2px;width:129px;height:39.60000000000002px;background:#dddddd;box-shadow:inset 0 0 0 1.4px #787878;"></div>
<div class="t" style="left:2473.6px;top:270.1px;font-size:21.62px;line-height:21.62px;color:#1e1e1e;transform:scaleX(1.0833);">参照</div>
<div class="t" style="left:1442.3px;top:322.5px;font-size:25.93px;line-height:25.93px;color:#1e1e1e;transform:scaleX(1.0794);">画像出力設定値</div>
<svg class="a" style="left:1672.5px;top:327.5px;" width="6" height="17.600000000000023" viewBox="0 0 6 17.600000000000023"><circle cx="3" cy="2.5" r="2.2" fill="#111"/><circle cx="3" cy="15.100000000000023" r="2.2" fill="#111"/></svg>
<div class="t" style="left:1702.0px;top:323.6px;font-size:26.34px;line-height:26.34px;color:#1e1e1e;transform:scaleX(1.0565);">解像度</div>
<div class="t" style="left:1786.7px;top:322.5px;font-size:27.89px;line-height:27.89px;color:#1e1e1e;transform:scaleX(0.9822);">(9 - 300)</div>
<svg class="a" style="left:1901.5px;top:329.5px;" width="6" height="16.399999999999977" viewBox="0 0 6 16.399999999999977"><circle cx="3" cy="2.5" r="2.2" fill="#111"/><circle cx="3" cy="13.899999999999977" r="2.2" fill="#111"/></svg>
<div class="a" style="left:1937px;top:315.7px;width:92.79999999999995px;height:41.0px;background:#ffffff;box-shadow:inset 0 0 0 1.3px #6e6e6e;"></div>
<div class="a" style="left:2008.3px;top:317.0px;width:20.200000000000045px;height:38.39999999999998px;background:#f0f0f0;"></div>
<div class="a" style="left:2008.3px;top:317.0px;width:1.0px;height:38.39999999999998px;background:#fafafa;"></div>
<div class="a" style="left:2026.8px;top:317.0px;width:1.7000000000000455px;height:38.39999999999998px;background:#6a6a6a;"></div>
<div class="a" style="left:2008.3px;top:333.09999999999997px;width:20.200000000000045px;height:2.400000000000034px;background:#7c7c7c;"></div>
<div class="a" style="left:2008.3px;top:352.5px;width:20.200000000000045px;height:2.0px;background:#7c7c7c;"></div>
<svg class="a" style="left:2013.8999999999999px;top:321.2px;" width="9" height="6" viewBox="0 0 9 6"><path d="M0.5 5H8.5L4.5 0.5Z" fill="#000"/></svg>
<svg class="a" style="left:2013.8999999999999px;top:343.5px;" width="9" height="6" viewBox="0 0 9 6"><path d="M0.5 1H8.5L4.5 5.5Z" fill="#000"/></svg>
<div class="t" style="left:1940.6px;top:324.9px;font-size:25.28px;line-height:25.28px;color:#1e1e1e;transform:scaleX(0.9333);">75</div>
<div class="t" style="left:2106.2px;top:323.4px;font-size:28.0px;line-height:28.0px;color:#1e1e1e;">検査範囲</div>
<svg class="a" style="left:2228.9px;top:329px;" width="6" height="17.100000000000023" viewBox="0 0 6 17.100000000000023"><circle cx="3" cy="2.5" r="2.2" fill="#111"/><circle cx="3" cy="14.600000000000023" r="2.2" fill="#111"/></svg>
<div class="a" style="left:2277px;top:316px;width:160px;height:41px;box-shadow:inset 0 0 0 1.2px #acacac;background:linear-gradient(#efefef,#e4e4e4)"></div>
<svg class="a" style="left:2411px;top:328.5px;" width="14" height="10" viewBox="0 0 14 10"><path d="M2 2L7 7L12 2" fill="none" stroke="#555" stroke-width="1.5"/></svg>
<div class="t" style="left:2289.2px;top:324.0px;font-size:26px;line-height:26px;color:#1e1e1e;transform:scaleX(0.7647);">全ページ</div>
<div class="t" style="left:1703.0px;top:377.4px;font-size:27.59px;line-height:27.59px;color:#6d6d6d;transform:scaleX(0.8631);">指定ページ</div>
<svg class="a" style="left:1833.4px;top:383.9px;" width="6" height="17.5" viewBox="0 0 6 17.5"><circle cx="3" cy="2.5" r="2.2" fill="#6d6d6d"/><circle cx="3" cy="15.0" r="2.2" fill="#6d6d6d"/></svg>
<div class="a" style="left:1850px;top:369px;width:651px;height:46.5px;background:#ffffff;box-shadow:inset 0 0 0 1.6px #6c6c6c;"></div>
<div class="t" style="left:1856.4px;top:378.1px;font-size:28.5px;line-height:28.5px;color:#1e1e1e;transform:scaleX(0.9407);">1,2,4-6</div>
<div class="t" style="left:1447.5px;top:434.0px;font-size:27.59px;line-height:27.59px;color:#1e1e1e;transform:scaleX(1.0085);">検版設定値</div>
<svg class="a" style="left:1672.5px;top:439px;" width="6" height="17.600000000000023" viewBox="0 0 6 17.600000000000023"><circle cx="3" cy="2.5" r="2.2" fill="#111"/><circle cx="3" cy="15.100000000000023" r="2.2" fill="#111"/></svg>
<div class="t" style="left:1702.6px;top:437.0px;font-size:26.2px;line-height:26.2px;color:#1e1e1e;transform:scaleX(0.9759);">位置ズレ許容量</div>
<div class="t" style="left:1884.0px;top:436.8px;font-size:26.28px;line-height:26.28px;color:#1e1e1e;transform:scaleX(1.0401);">(0 - 2)</div>
<svg class="a" style="left:1968.6px;top:441.9px;" width="6" height="15.5" viewBox="0 0 6 15.5"><circle cx="3" cy="2.5" r="2.2" fill="#111"/><circle cx="3" cy="13.0" r="2.2" fill="#111"/></svg>
<div class="a" style="left:1997px;top:428.5px;width:63.5px;height:40.0px;background:#ffffff;box-shadow:inset 0 0 0 1.3px #6e6e6e;"></div>
<div class="a" style="left:2039.0px;top:429.8px;width:20.199999999999818px;height:37.39999999999998px;background:#f0f0f0;"></div>
<div class="a" style="left:2039.0px;top:429.8px;width:1.0px;height:37.39999999999998px;background:#fafafa;"></div>
<div class="a" style="left:2057.5px;top:429.8px;width:1.699999999999818px;height:37.39999999999998px;background:#6a6a6a;"></div>
<div class="a" style="left:2039.0px;top:445.9px;width:20.199999999999818px;height:2.400000000000034px;background:#7c7c7c;"></div>
<div class="a" style="left:2039.0px;top:464.3px;width:20.199999999999818px;height:2.0px;background:#7c7c7c;"></div>
<svg class="a" style="left:2044.6px;top:434.0px;" width="9" height="6" viewBox="0 0 9 6"><path d="M0.5 5H8.5L4.5 0.5Z" fill="#000"/></svg>
<svg class="a" style="left:2044.6px;top:456.3px;" width="9" height="6" viewBox="0 0 9 6"><path d="M0.5 1H8.5L4.5 5.5Z" fill="#000"/></svg>
<div class="t" style="left:2000.6px;top:437.3px;font-size:25.13px;line-height:25.13px;color:#1e1e1e;transform:scaleX(0.9569);">2</div>
<div class="t" style="left:2106.8px;top:438.3px;font-size:24.2px;line-height:24.2px;color:#1e1e1e;transform:scaleX(1.1446);">諧調差許容量</div>
<div class="t" style="left:2273.1px;top:435.8px;font-size:26.71px;line-height:26.71px;color:#1e1e1e;transform:scaleX(1.0278);">(0 - 255)</div>
<svg class="a" style="left:2389px;top:441.8px;" width="6" height="16.5" viewBox="0 0 6 16.5"><circle cx="3" cy="2.5" r="2.2" fill="#111"/><circle cx="3" cy="14.0" r="2.2" fill="#111"/></svg>
<div class="a" style="left:2417.3px;top:428px;width:84.69999999999982px;height:40.5px;background:#ffffff;box-shadow:inset 0 0 0 1.3px #6e6e6e;"></div>
<div class="a" style="left:2480.5px;top:429.3px;width:20.199999999999818px;height:37.89999999999998px;background:#f0f0f0;"></div>
<div class="a" style="left:2480.5px;top:429.3px;width:1.0px;height:37.89999999999998px;background:#fafafa;"></div>
<div class="a" style="left:2499px;top:429.3px;width:1.699999999999818px;height:37.89999999999998px;background:#6a6a6a;"></div>
<div class="a" style="left:2480.5px;top:445.4px;width:20.199999999999818px;height:2.400000000000034px;background:#7c7c7c;"></div>
<div class="a" style="left:2480.5px;top:464.3px;width:20.199999999999818px;height:2.0px;background:#7c7c7c;"></div>
<svg class="a" style="left:2486.1px;top:433.5px;" width="9" height="6" viewBox="0 0 9 6"><path d="M0.5 5H8.5L4.5 0.5Z" fill="#000"/></svg>
<svg class="a" style="left:2486.1px;top:455.8px;" width="9" height="6" viewBox="0 0 9 6"><path d="M0.5 1H8.5L4.5 5.5Z" fill="#000"/></svg>
<div class="t" style="left:2420.9px;top:437.1px;font-size:25.13px;line-height:25.13px;color:#1e1e1e;transform:scaleX(0.9502);">60</div>
<div class="t" style="left:1702.6px;top:494.6px;font-size:24.5px;line-height:24.5px;color:#1e1e1e;transform:scaleX(1.1364);">微小差異許容量</div>
<div class="t" style="left:1898.0px;top:492.7px;font-size:26.28px;line-height:26.28px;color:#1e1e1e;transform:scaleX(1.0476);">(0 - 8)</div>
<svg class="a" style="left:1983.5px;top:497.8px;" width="6" height="15.499999999999943" viewBox="0 0 6 15.499999999999943"><circle cx="3" cy="2.5" r="2.2" fill="#111"/><circle cx="3" cy="12.999999999999943" r="2.2" fill="#111"/></svg>
<div class="a" style="left:1997px;top:484px;width:63.5px;height:40.5px;background:#ffffff;box-shadow:inset 0 0 0 1.3px #6e6e6e;"></div>
<div class="a" style="left:2039.0px;top:485.3px;width:20.199999999999818px;height:37.900000000000034px;background:#f0f0f0;"></div>
<div class="a" style="left:2039.0px;top:485.3px;width:1.0px;height:37.900000000000034px;background:#fafafa;"></div>
<div class="a" style="left:2057.5px;top:485.3px;width:1.699999999999818px;height:37.900000000000034px;background:#6a6a6a;"></div>
<div class="a" style="left:2039.0px;top:501.4px;width:20.199999999999818px;height:2.400000000000034px;background:#7c7c7c;"></div>
<div class="a" style="left:2039.0px;top:520.3px;width:20.199999999999818px;height:2.0px;background:#7c7c7c;"></div>
<svg class="a" style="left:2044.6px;top:489.5px;" width="9" height="6" viewBox="0 0 9 6"><path d="M0.5 5H8.5L4.5 0.5Z" fill="#000"/></svg>
<svg class="a" style="left:2044.6px;top:511.8px;" width="9" height="6" viewBox="0 0 9 6"><path d="M0.5 1H8.5L4.5 5.5Z" fill="#000"/></svg>
<div class="t" style="left:2000.6px;top:493.7px;font-size:25.13px;line-height:25.13px;color:#1e1e1e;transform:scaleX(0.8992);">8</div>
<div class="t" style="left:2105.9px;top:492.7px;font-size:25.5px;line-height:25.5px;color:#1e1e1e;transform:scaleX(0.9659);">視覚的あいまい量</div>
<div class="t" style="left:2306.7px;top:491.7px;font-size:26.71px;line-height:26.71px;color:#1e1e1e;transform:scaleX(1.0454);">(0 - 7)</div>
<svg class="a" style="left:2392px;top:497.7px;" width="6" height="16.500000000000057" viewBox="0 0 6 16.500000000000057"><circle cx="3" cy="2.5" r="2.2" fill="#111"/><circle cx="3" cy="14.000000000000057" r="2.2" fill="#111"/></svg>
<div class="a" style="left:2417.3px;top:485.2px;width:84.69999999999982px;height:40.400000000000034px;background:#ffffff;box-shadow:inset 0 0 0 1.3px #6e6e6e;"></div>
<div class="a" style="left:2480.5px;top:486.5px;width:20.199999999999818px;height:37.80000000000007px;background:#f0f0f0;"></div>
<div class="a" style="left:2480.5px;top:486.5px;width:1.0px;height:37.80000000000007px;background:#fafafa;"></div>
<div class="a" style="left:2499px;top:486.5px;width:1.699999999999818px;height:37.80000000000007px;background:#6a6a6a;"></div>
<div class="a" style="left:2480.5px;top:502.59999999999997px;width:20.199999999999818px;height:2.400000000000034px;background:#7c7c7c;"></div>
<div class="a" style="left:2480.5px;top:521.4px;width:20.199999999999818px;height:2.0px;background:#7c7c7c;"></div>
<svg class="a" style="left:2486.1px;top:490.7px;" width="9" height="6" viewBox="0 0 9 6"><path d="M0.5 5H8.5L4.5 0.5Z" fill="#000"/></svg>
<svg class="a" style="left:2486.1px;top:513.0px;" width="9" height="6" viewBox="0 0 9 6"><path d="M0.5 1H8.5L4.5 5.5Z" fill="#000"/></svg>
<div class="t" style="left:2421.0px;top:494.2px;font-size:24.84px;line-height:24.84px;color:#1e1e1e;transform:scaleX(0.8614);">5</div>
<div class="a" style="left:1506px;top:544px;width:995px;height:310px;background:#ffffff;box-shadow:inset 0 0 0 1.5px #6a6a6a;"></div>
<div class="a" style="left:2464px;top:545.5px;width:35.5px;height:307.0px;background:#f0f0f0;"></div>
<div class="a" style="left:2464px;top:713px;width:35.5px;height:74px;background:#cdcdcd;"></div>
<svg class="a" style="left:2471px;top:556px;" width="20" height="14" viewBox="0 0 20 14"><path d="M3 11L10 4L17 11" fill="none" stroke="#a3a3a3" stroke-width="2"/></svg>
<svg class="a" style="left:2471px;top:828px;" width="20" height="14" viewBox="0 0 20 14"><path d="M3 3L10 10L17 3" fill="none" stroke="#a3a3a3" stroke-width="2"/></svg>
<div class="a" style="left:1507px;top:545px;width:957px;height:308px;overflow:hidden"><div style="position:absolute;left:-1507px;top:-545px;width:2589px;height:936px"><div class="t" style="left:1539.0px;top:546.3px;font-size:28px;line-height:28px;color:#1e1e1e;transform:scaleX(1.0161);">[検版結果]</div></div></div>
<div class="a" style="left:1507px;top:545px;width:957px;height:308px;overflow:hidden"><div style="position:absolute;left:-1507px;top:-545px;width:2589px;height:936px"><div class="t" style="left:1569.0px;top:583.3px;font-size:28px;line-height:28px;color:#1e1e1e;transform:scaleX(0.9259);">ALL：13</div></div></div>
<div class="a" style="left:1507px;top:545px;width:957px;height:308px;overflow:hidden"><div style="position:absolute;left:-1507px;top:-545px;width:2589px;height:936px"><div class="t" style="left:1568.0px;top:620.3px;font-size:28px;line-height:28px;color:#1e1e1e;transform:scaleX(0.9667);">OK ：4</div></div></div>
<div class="a" style="left:1507px;top:545px;width:957px;height:308px;overflow:hidden"><div style="position:absolute;left:-1507px;top:-545px;width:2589px;height:936px"><div class="t" style="left:1567.0px;top:657.3px;font-size:28px;line-height:28px;color:#1e1e1e;transform:scaleX(0.9889);">NG ：9</div></div></div>
<div class="a" style="left:1507px;top:545px;width:957px;height:308px;overflow:hidden"><div style="position:absolute;left:-1507px;top:-545px;width:2589px;height:936px"><div class="t" style="left:1568.1px;top:694.3px;font-size:28px;line-height:28px;color:#1e1e1e;transform:scaleX(0.8745);">OK-バイナリ比較：0</div></div></div>
<div class="a" style="left:1507px;top:545px;width:957px;height:308px;overflow:hidden"><div style="position:absolute;left:-1507px;top:-545px;width:2589px;height:936px"><div class="t" style="left:1568.0px;top:731.3px;font-size:28px;line-height:28px;color:#1e1e1e;transform:scaleX(0.9961);">OK-完全一致検版：0</div></div></div>
<div class="a" style="left:1507px;top:545px;width:957px;height:308px;overflow:hidden"><div style="position:absolute;left:-1507px;top:-545px;width:2589px;height:936px"><div class="t" style="left:1568.1px;top:768.3px;font-size:28px;line-height:28px;color:#1e1e1e;transform:scaleX(0.8939);">OK-ゆすらせ検版：4</div></div></div>
<div class="a" style="left:1507px;top:545px;width:957px;height:308px;overflow:hidden"><div style="position:absolute;left:-1507px;top:-545px;width:2589px;height:936px"><div class="t" style="left:1567.0px;top:805.3px;font-size:28px;line-height:28px;color:#1e1e1e;transform:scaleX(1.0038);">NG-完全一致検版：0</div></div></div>
<div class="a" style="left:1507px;top:545px;width:957px;height:308px;overflow:hidden"><div style="position:absolute;left:-1507px;top:-545px;width:2589px;height:936px"><div class="t" style="left:1567.0px;top:842.3px;font-size:28px;line-height:28px;color:#1e1e1e;transform:scaleX(0.9886);">NG-ゆすらせ検版：0</div></div></div>
<div class="t" style="left:1511.3px;top:886.6px;font-size:26.17px;line-height:26.17px;color:#1e1e1e;transform:scaleX(1.0543);">出力形式</div>
<svg class="a" style="left:1634px;top:892.1px;" width="6" height="17.100000000000023" viewBox="0 0 6 17.100000000000023"><circle cx="3" cy="2.5" r="2.2" fill="#111"/><circle cx="3" cy="14.600000000000023" r="2.2" fill="#111"/></svg>
<div class="a" style="left:1657px;top:876px;width:120.70000000000005px;height:41.799999999999955px;box-shadow:inset 0 0 0 1.2px #acacac;background:linear-gradient(#efefef,#e4e4e4)"></div>
<svg class="a" style="left:1751px;top:889px;" width="17" height="13" viewBox="0 0 17 13"><path d="M3.5 3L8.5 8L13.5 3" fill="none" stroke="#505050" stroke-width="1.7"/></svg>
<div class="t" style="left:1668.0px;top:887.0px;font-size:26.01px;line-height:26.01px;color:#1e1e1e;transform:scaleX(0.7721);">TIFF</div>
<div class="a" style="left:1794.2px;top:875.8px;width:163.70000000000005px;height:43.200000000000045px;background:#dddddd;box-shadow:inset 0 0 0 1.4px #717171;"></div>
<div class="t" style="left:1828.6px;top:888.8px;font-size:21.78px;line-height:21.78px;color:#1e1e1e;transform:scaleX(1.0810);">画像出力</div>
<div class="a" style="left:1977px;top:875.8px;width:163.5999999999999px;height:43.200000000000045px;background:#dddddd;box-shadow:inset 0 0 0 1.4px #717171;"></div>
<div class="t" style="left:2032.9px;top:888.8px;font-size:22.09px;line-height:22.09px;color:#1e1e1e;transform:scaleX(1.1062);">比較</div>
<div class="a" style="left:2345.2px;top:876px;width:152.70000000000027px;height:43.39999999999998px;background:#dddddd;box-shadow:inset 0 0 0 1.6px #6a6a6a;"></div>
<div class="t" style="left:2392.2px;top:886.2px;font-size:25.85px;line-height:25.85px;color:#1e1e1e;transform:scaleX(0.8761);">Close</div>
</body></html>
